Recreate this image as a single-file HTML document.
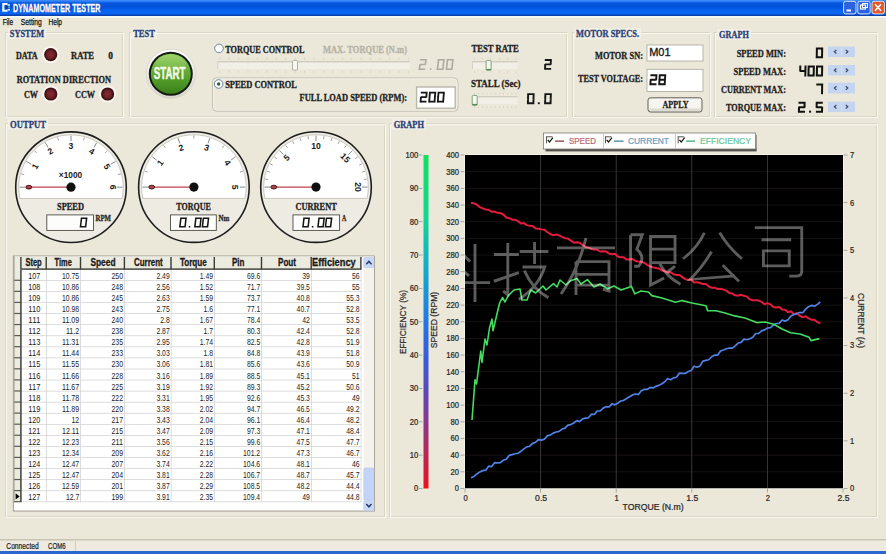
<!DOCTYPE html>
<html><head><meta charset="utf-8"><style>
html,body{margin:0;padding:0;background:#ebe8da;width:886px;height:554px;overflow:hidden}
svg{display:block}
</style></head><body>
<svg width="886" height="554" viewBox="0 0 886 554">
<rect x="0" y="0" width="886" height="554" fill="#ebe8da"/>
<defs>
<linearGradient id="tb" x1="0" y1="0" x2="0" y2="1">
 <stop offset="0" stop-color="#3f92fc"/><stop offset="0.1" stop-color="#2a78f0"/><stop offset="0.18" stop-color="#0658de"/><stop offset="0.45" stop-color="#0252dc"/><stop offset="0.7" stop-color="#0866f2"/><stop offset="0.86" stop-color="#0a64ee"/><stop offset="0.93" stop-color="#0a48c0"/><stop offset="1" stop-color="#0c3aa0"/>
</linearGradient>
<linearGradient id="tbh" x1="0" y1="0" x2="1" y2="0">
 <stop offset="0" stop-color="#0a50d0" stop-opacity="0.3"/><stop offset="1" stop-color="#3a8cff" stop-opacity="0"/>
</linearGradient>
</defs>
<rect x="0" y="0" width="886" height="16" fill="url(#tb)"/>
<rect x="0" y="16" width="886" height="1.8" fill="#f8faf4"/>
<path d="M2.2 3.0H7.6V5.0H4.4V9.8H7.6V11.8H2.2Z" fill="#eef4fa"/><path d="M5.6 5.6L9.8 7.4L5.6 9.2Z" fill="#103a90"/><rect x="7.6" y="4.2" width="2.4" height="1.6" fill="#c8f0e0"/><rect x="7.6" y="9.0" width="2.4" height="1.6" fill="#c8f0e0"/><rect x="8.0" y="6.6" width="2" height="1.6" fill="#50b0a0"/>
<text x="13.10" y="11.70" font-family='"Liberation Sans", sans-serif' font-weight="bold" font-size="10.47" fill="#0a2a7a" textLength="87.40" lengthAdjust="spacingAndGlyphs" transform="translate(0.8,0.8)" opacity="0.7">DYNAMOMETER TESTER</text>
<text x="13.10" y="11.70" font-family='"Liberation Sans", sans-serif' font-weight="bold" font-size="10.47" fill="#ffffff" textLength="87.40" lengthAdjust="spacingAndGlyphs" stroke="#ffffff" stroke-width="0.3">DYNAMOMETER TESTER</text>
<rect x="843.6" y="1.3" width="12.4" height="12.6" rx="2" fill="#2a62e0" stroke="#e8f0ff" stroke-width="0.9"/>
<rect x="857.8" y="1.3" width="12.4" height="12.6" rx="2" fill="#2a62e0" stroke="#e8f0ff" stroke-width="0.9"/>
<rect x="872.0" y="1.3" width="12.4" height="12.6" rx="2" fill="#e2582a" stroke="#e8f0ff" stroke-width="0.9"/>
<rect x="846.5" y="9.5" width="4.5" height="2" fill="#fff"/>
<rect x="860.5" y="5" width="5" height="4" fill="none" stroke="#fff" stroke-width="1.2"/><rect x="862.5" y="3.5" width="5" height="4" fill="none" stroke="#fff" stroke-width="1"/>
<path d="M875 4.2l6 6.6M881 4.2l-6 6.6" stroke="#fff" stroke-width="1.6"/>
<text x="2.70" y="24.60" font-family='"Liberation Sans", sans-serif' font-weight="normal" font-size="8.72" fill="#111" textLength="10.40" lengthAdjust="spacingAndGlyphs" stroke="#111" stroke-width="0.25">File</text>
<text x="20.80" y="24.60" font-family='"Liberation Sans", sans-serif' font-weight="normal" font-size="8.72" fill="#111" textLength="21.00" lengthAdjust="spacingAndGlyphs" stroke="#111" stroke-width="0.25">Setting</text>
<text x="48.50" y="24.60" font-family='"Liberation Sans", sans-serif' font-weight="normal" font-size="8.72" fill="#111" textLength="13.50" lengthAdjust="spacingAndGlyphs" stroke="#111" stroke-width="0.25">Help</text>
<rect x="5.5" y="32.5" width="117.0" height="84.0" fill="none" stroke="#d9d5c3" stroke-width="1"/>
<rect x="6.5" y="33.5" width="117.0" height="84.0" fill="none" stroke="#faf9f2" stroke-width="1"/>
<rect x="129.5" y="32.5" width="437.0" height="84.0" fill="none" stroke="#d9d5c3" stroke-width="1"/>
<rect x="130.5" y="33.5" width="437.0" height="84.0" fill="none" stroke="#faf9f2" stroke-width="1"/>
<rect x="572.5" y="32.5" width="137.0" height="84.0" fill="none" stroke="#d9d5c3" stroke-width="1"/>
<rect x="573.5" y="33.5" width="137.0" height="84.0" fill="none" stroke="#faf9f2" stroke-width="1"/>
<rect x="714.5" y="32.5" width="162.0" height="84.0" fill="none" stroke="#d9d5c3" stroke-width="1"/>
<rect x="715.5" y="33.5" width="162.0" height="84.0" fill="none" stroke="#faf9f2" stroke-width="1"/>
<rect x="5.5" y="123.8" width="379.0" height="392.7" fill="none" stroke="#d9d5c3" stroke-width="1"/>
<rect x="6.5" y="124.8" width="379.0" height="392.7" fill="none" stroke="#faf9f2" stroke-width="1"/>
<rect x="389.5" y="123.8" width="487.0" height="392.7" fill="none" stroke="#d9d5c3" stroke-width="1"/>
<rect x="390.5" y="124.8" width="487.0" height="392.7" fill="none" stroke="#faf9f2" stroke-width="1"/>
<rect x="7.8" y="28.5" width="38.5" height="10.4" fill="#f1efe6"/>
<text x="9.75" y="36.90" font-family='"Liberation Serif", serif' font-weight="bold" font-size="9.77" fill="#2a3e76" textLength="34.45" lengthAdjust="spacingAndGlyphs" stroke="#2a3e76" stroke-width="0.3">SYSTEM</text>
<rect x="131.2" y="28.5" width="25.8" height="10.5" fill="#f1efe6"/>
<text x="133.20" y="37.00" font-family='"Liberation Serif", serif' font-weight="bold" font-size="9.92" fill="#2a3e76" textLength="21.80" lengthAdjust="spacingAndGlyphs" stroke="#2a3e76" stroke-width="0.3">TEST</text>
<rect x="574.0" y="28.3" width="67.0" height="10.8" fill="#f1efe6"/>
<text x="576.00" y="37.10" font-family='"Liberation Serif", serif' font-weight="bold" font-size="10.38" fill="#2a3e76" textLength="63.00" lengthAdjust="spacingAndGlyphs" stroke="#2a3e76" stroke-width="0.3">MOTOR SPECS.</text>
<rect x="717.0" y="29.0" width="34.0" height="10.9" fill="#f1efe6"/>
<text x="719.00" y="37.90" font-family='"Liberation Serif", serif' font-weight="bold" font-size="10.53" fill="#2a3e76" textLength="30.00" lengthAdjust="spacingAndGlyphs" stroke="#2a3e76" stroke-width="0.3">GRAPH</text>
<rect x="8.0" y="118.8" width="40.0" height="10.8" fill="#f1efe6"/>
<text x="10.00" y="127.60" font-family='"Liberation Serif", serif' font-weight="bold" font-size="10.38" fill="#2a3e76" textLength="36.00" lengthAdjust="spacingAndGlyphs" stroke="#2a3e76" stroke-width="0.3">OUTPUT</text>
<rect x="391.7" y="118.9" width="34.3" height="10.8" fill="#f1efe6"/>
<text x="393.70" y="127.70" font-family='"Liberation Serif", serif' font-weight="bold" font-size="10.38" fill="#2a3e76" textLength="30.30" lengthAdjust="spacingAndGlyphs" stroke="#2a3e76" stroke-width="0.3">GRAPH</text>
<defs><radialGradient id="ledg" cx="0.5" cy="0.5" r="0.55"><stop offset="0" stop-color="#8a2a34"/><stop offset="0.65" stop-color="#6c2028"/><stop offset="1" stop-color="#421216"/></radialGradient></defs>
<text x="15.90" y="58.50" font-family='"Liberation Serif", serif' font-weight="bold" font-size="9.47" fill="#1c1c1c" textLength="21.80" lengthAdjust="spacingAndGlyphs" stroke="#1c1c1c" stroke-width="0.3">DATA</text>
<circle cx="50.7" cy="54.6" r="8.6" fill="#f8f6ee"/>
<circle cx="50.7" cy="54.6" r="6.6" fill="#3e1212"/>
<circle cx="50.7" cy="54.6" r="5.3" fill="url(#ledg)"/>
<text x="71.00" y="58.50" font-family='"Liberation Serif", serif' font-weight="bold" font-size="9.47" fill="#1c1c1c" textLength="23.00" lengthAdjust="spacingAndGlyphs" stroke="#1c1c1c" stroke-width="0.3">RATE</text>
<text x="108.30" y="58.50" font-family='"Liberation Serif", serif' font-weight="bold" font-size="9.47" fill="#1c1c1c" textLength="4.70" lengthAdjust="spacingAndGlyphs" stroke="#1c1c1c" stroke-width="0.3">0</text>
<text x="16.70" y="83.20" font-family='"Liberation Serif", serif' font-weight="bold" font-size="9.77" fill="#1c1c1c" textLength="94.30" lengthAdjust="spacingAndGlyphs" stroke="#1c1c1c" stroke-width="0.3">ROTATION DIRECTION</text>
<text x="24.00" y="98.00" font-family='"Liberation Serif", serif' font-weight="bold" font-size="9.77" fill="#1c1c1c" textLength="14.00" lengthAdjust="spacingAndGlyphs" stroke="#1c1c1c" stroke-width="0.3">CW</text>
<circle cx="50.8" cy="94.0" r="8.6" fill="#f8f6ee"/>
<circle cx="50.8" cy="94.0" r="6.6" fill="#3e1212"/>
<circle cx="50.8" cy="94.0" r="5.3" fill="url(#ledg)"/>
<text x="75.00" y="98.00" font-family='"Liberation Serif", serif' font-weight="bold" font-size="9.77" fill="#1c1c1c" textLength="20.00" lengthAdjust="spacingAndGlyphs" stroke="#1c1c1c" stroke-width="0.3">CCW</text>
<circle cx="107.6" cy="94.0" r="8.6" fill="#f8f6ee"/>
<circle cx="107.6" cy="94.0" r="6.6" fill="#3e1212"/>
<circle cx="107.6" cy="94.0" r="5.3" fill="url(#ledg)"/>
<defs>
<linearGradient id="startg" x1="0" y1="0" x2="0" y2="1"><stop offset="0" stop-color="#94cf5c"/><stop offset="0.35" stop-color="#6cb238"/><stop offset="0.6" stop-color="#56a02a"/><stop offset="1" stop-color="#3a7f1c"/></linearGradient>
<linearGradient id="startw" x1="0" y1="0" x2="0" y2="1"><stop offset="0" stop-color="#ffffff"/><stop offset="1" stop-color="#d8d6cc"/></linearGradient>
</defs>
<circle cx="170.8" cy="73.8" r="24.6" fill="url(#startw)" stroke="#cfccc0" stroke-width="0.6"/>
<circle cx="170.8" cy="73.8" r="22.0" fill="#141a10"/>
<circle cx="170.8" cy="73.8" r="20.0" fill="url(#startg)"/>
<ellipse cx="170.8" cy="63" rx="15" ry="8" fill="#ffffff" opacity="0.10"/>
<text x="153.80" y="79.40" font-family='"Liberation Sans", sans-serif' font-weight="bold" font-size="16.72" fill="#f2f8e6" textLength="31.70" lengthAdjust="spacingAndGlyphs" stroke="#f2f8e6" stroke-width="0.6">START</text>
<circle cx="219.0" cy="48.4" r="4.3" fill="#fbfbf8" stroke="#5a7aa0" stroke-width="0.9"/>
<text x="225.20" y="53.20" font-family='"Liberation Serif", serif' font-weight="bold" font-size="10.69" fill="#1c1c1c" textLength="79.20" lengthAdjust="spacingAndGlyphs" stroke="#1c1c1c" stroke-width="0.3">TORQUE CONTROL</text>
<text x="323.00" y="52.80" font-family='"Liberation Serif", serif' font-weight="bold" font-size="10.69" fill="#b6b2a4" textLength="84.00" lengthAdjust="spacingAndGlyphs" stroke="#b6b2a4" stroke-width="0.3">MAX. TORQUE (N.m)</text>
<rect x="219.3" y="57.8" width="0.8" height="1.6" fill="#cfcbbd"/>
<rect x="219.3" y="71.1" width="0.8" height="1.6" fill="#cfcbbd"/>
<rect x="228.7" y="57.8" width="0.8" height="1.6" fill="#cfcbbd"/>
<rect x="228.7" y="71.1" width="0.8" height="1.6" fill="#cfcbbd"/>
<rect x="238.2" y="57.8" width="0.8" height="1.6" fill="#cfcbbd"/>
<rect x="238.2" y="71.1" width="0.8" height="1.6" fill="#cfcbbd"/>
<rect x="247.6" y="57.8" width="0.8" height="1.6" fill="#cfcbbd"/>
<rect x="247.6" y="71.1" width="0.8" height="1.6" fill="#cfcbbd"/>
<rect x="257.0" y="57.8" width="0.8" height="1.6" fill="#cfcbbd"/>
<rect x="257.0" y="71.1" width="0.8" height="1.6" fill="#cfcbbd"/>
<rect x="266.5" y="57.8" width="0.8" height="1.6" fill="#cfcbbd"/>
<rect x="266.5" y="71.1" width="0.8" height="1.6" fill="#cfcbbd"/>
<rect x="275.9" y="57.8" width="0.8" height="1.6" fill="#cfcbbd"/>
<rect x="275.9" y="71.1" width="0.8" height="1.6" fill="#cfcbbd"/>
<rect x="285.3" y="57.8" width="0.8" height="1.6" fill="#cfcbbd"/>
<rect x="285.3" y="71.1" width="0.8" height="1.6" fill="#cfcbbd"/>
<rect x="294.8" y="57.8" width="0.8" height="1.6" fill="#cfcbbd"/>
<rect x="294.8" y="71.1" width="0.8" height="1.6" fill="#cfcbbd"/>
<rect x="304.2" y="57.8" width="0.8" height="1.6" fill="#cfcbbd"/>
<rect x="304.2" y="71.1" width="0.8" height="1.6" fill="#cfcbbd"/>
<rect x="313.6" y="57.8" width="0.8" height="1.6" fill="#cfcbbd"/>
<rect x="313.6" y="71.1" width="0.8" height="1.6" fill="#cfcbbd"/>
<rect x="323.1" y="57.8" width="0.8" height="1.6" fill="#cfcbbd"/>
<rect x="323.1" y="71.1" width="0.8" height="1.6" fill="#cfcbbd"/>
<rect x="332.5" y="57.8" width="0.8" height="1.6" fill="#cfcbbd"/>
<rect x="332.5" y="71.1" width="0.8" height="1.6" fill="#cfcbbd"/>
<rect x="342.0" y="57.8" width="0.8" height="1.6" fill="#cfcbbd"/>
<rect x="342.0" y="71.1" width="0.8" height="1.6" fill="#cfcbbd"/>
<rect x="351.4" y="57.8" width="0.8" height="1.6" fill="#cfcbbd"/>
<rect x="351.4" y="71.1" width="0.8" height="1.6" fill="#cfcbbd"/>
<rect x="360.8" y="57.8" width="0.8" height="1.6" fill="#cfcbbd"/>
<rect x="360.8" y="71.1" width="0.8" height="1.6" fill="#cfcbbd"/>
<rect x="370.3" y="57.8" width="0.8" height="1.6" fill="#cfcbbd"/>
<rect x="370.3" y="71.1" width="0.8" height="1.6" fill="#cfcbbd"/>
<rect x="379.7" y="57.8" width="0.8" height="1.6" fill="#cfcbbd"/>
<rect x="379.7" y="71.1" width="0.8" height="1.6" fill="#cfcbbd"/>
<rect x="389.1" y="57.8" width="0.8" height="1.6" fill="#cfcbbd"/>
<rect x="389.1" y="71.1" width="0.8" height="1.6" fill="#cfcbbd"/>
<rect x="398.6" y="57.8" width="0.8" height="1.6" fill="#cfcbbd"/>
<rect x="398.6" y="71.1" width="0.8" height="1.6" fill="#cfcbbd"/>
<rect x="408.0" y="57.8" width="0.8" height="1.6" fill="#cfcbbd"/>
<rect x="408.0" y="71.1" width="0.8" height="1.6" fill="#cfcbbd"/>
<rect x="217.3" y="61.5" width="192.7" height="7.5" fill="#f2f0e6"/>
<rect x="217.3" y="61.3" width="192.7" height="1" fill="#c4c0b2"/>
<rect x="217.3" y="61.3" width="1" height="7.7" fill="#d6d2c4"/>
<rect x="292.5" y="60.4" width="5" height="9.8" rx="1.2" fill="#f8f7f2" stroke="#a9a597" stroke-width="0.9"/>
<rect x="429.85" y="68.40" width="1.60" height="1.60" fill="#aeaa9e"/>
<path d="M420.92 59.80L425.92 59.80M420.71 64.50L424.61 64.50M419.40 69.20L424.40 69.20M419.89 65.05L419.40 69.20M425.92 59.80L425.43 63.95M438.52 59.80L443.92 59.80M437.40 69.20L442.80 69.20M438.52 59.80L438.03 63.95M437.89 65.05L437.40 69.20M443.92 59.80L443.43 63.95M443.29 65.05L442.80 69.20M447.52 59.80L452.92 59.80M446.40 69.20L451.80 69.20M447.52 59.80L447.03 63.95M446.89 65.05L446.40 69.20M452.92 59.80L452.43 63.95M452.29 65.05L451.80 69.20" stroke="#aeaa9e" stroke-width="1.60" fill="none" stroke-linecap="square" stroke-linejoin="round"/>
<rect x="212.5" y="77.9" width="245.5" height="33.3" rx="4" fill="none" stroke="#c0bcad" stroke-width="0.9"/>
<rect x="213.5" y="78.9" width="243.5" height="31.3" rx="3.5" fill="none" stroke="#f8f7f0" stroke-width="0.6"/>
<circle cx="218.6" cy="84.0" r="4.3" fill="#fbfbf8" stroke="#5a7aa0" stroke-width="0.9"/>
<circle cx="218.6" cy="84.0" r="1.7" fill="#3a5a3a"/>
<text x="225.20" y="88.40" font-family='"Liberation Serif", serif' font-weight="bold" font-size="10.38" fill="#1c1c1c" textLength="71.70" lengthAdjust="spacingAndGlyphs" stroke="#1c1c1c" stroke-width="0.3">SPEED CONTROL</text>
<text x="299.60" y="101.40" font-family='"Liberation Serif", serif' font-weight="bold" font-size="10.38" fill="#1c1c1c" textLength="107.40" lengthAdjust="spacingAndGlyphs" stroke="#1c1c1c" stroke-width="0.3">FULL LOAD SPEED (RPM):</text>
<rect x="416.6" y="87.0" width="38.6" height="21.2" fill="#ffffff" stroke="#bab7ab" stroke-width="1.4"/>
<path d="M421.69 92.70L426.69 92.70M421.68 97.20L425.58 97.20M420.57 101.70L425.57 101.70M420.89 97.75L420.57 101.70M426.69 92.70L426.38 96.65M429.89 92.70L435.29 92.70M429.17 101.70L434.57 101.70M429.89 92.70L429.58 96.65M429.49 97.75L429.17 101.70M435.29 92.70L434.98 96.65M434.89 97.75L434.57 101.70M438.49 92.70L443.89 92.70M437.77 101.70L443.17 101.70M438.49 92.70L438.18 96.65M438.09 97.75L437.77 101.70M443.89 92.70L443.58 96.65M443.49 97.75L443.17 101.70" stroke="#151515" stroke-width="1.80" fill="none" stroke-linecap="square" stroke-linejoin="round"/>
<text x="471.60" y="52.20" font-family='"Liberation Serif", serif' font-weight="bold" font-size="9.77" fill="#1c1c1c" textLength="47.20" lengthAdjust="spacingAndGlyphs" stroke="#1c1c1c" stroke-width="0.3">TEST RATE</text>
<rect x="474.0" y="57.8" width="0.8" height="1.6" fill="#cfcbbd"/>
<rect x="474.0" y="71.2" width="0.8" height="1.6" fill="#cfcbbd"/>
<rect x="482.3" y="57.8" width="0.8" height="1.6" fill="#cfcbbd"/>
<rect x="482.3" y="71.2" width="0.8" height="1.6" fill="#cfcbbd"/>
<rect x="490.6" y="57.8" width="0.8" height="1.6" fill="#cfcbbd"/>
<rect x="490.6" y="71.2" width="0.8" height="1.6" fill="#cfcbbd"/>
<rect x="499.0" y="57.8" width="0.8" height="1.6" fill="#cfcbbd"/>
<rect x="499.0" y="71.2" width="0.8" height="1.6" fill="#cfcbbd"/>
<rect x="507.3" y="57.8" width="0.8" height="1.6" fill="#cfcbbd"/>
<rect x="507.3" y="71.2" width="0.8" height="1.6" fill="#cfcbbd"/>
<rect x="515.6" y="57.8" width="0.8" height="1.6" fill="#cfcbbd"/>
<rect x="515.6" y="71.2" width="0.8" height="1.6" fill="#cfcbbd"/>
<rect x="472.0" y="61.5" width="45.6" height="7.6" fill="#f2f0e6"/>
<rect x="472.0" y="61.3" width="45.6" height="1" fill="#c4c0b2"/>
<rect x="472.0" y="61.3" width="1" height="7.8" fill="#d6d2c4"/>
<rect x="486.1" y="60.4" width="5" height="9.8" rx="1.2" fill="#f8f7f2" stroke="#6a9a6a" stroke-width="0.9"/>
<rect x="486.1" y="68.9" width="5" height="1.4" fill="#5a8a5a"/>
<path d="M545.75 59.95L550.85 59.95M545.96 64.40L549.96 64.40M545.08 68.85L550.18 68.85M545.20 64.95L545.08 68.85M550.85 59.95L550.73 63.85" stroke="#151515" stroke-width="1.90" fill="none" stroke-linecap="square" stroke-linejoin="round"/>
<text x="471.00" y="86.80" font-family='"Liberation Serif", serif' font-weight="bold" font-size="10.08" fill="#1c1c1c" textLength="49.50" lengthAdjust="spacingAndGlyphs" stroke="#1c1c1c" stroke-width="0.3">STALL (Sec)</text>
<rect x="474.0" y="92.8" width="0.8" height="1.6" fill="#cfcbbd"/>
<rect x="474.0" y="106.3" width="0.8" height="1.6" fill="#cfcbbd"/>
<rect x="478.2" y="92.8" width="0.8" height="1.6" fill="#cfcbbd"/>
<rect x="478.2" y="106.3" width="0.8" height="1.6" fill="#cfcbbd"/>
<rect x="482.3" y="92.8" width="0.8" height="1.6" fill="#cfcbbd"/>
<rect x="482.3" y="106.3" width="0.8" height="1.6" fill="#cfcbbd"/>
<rect x="486.5" y="92.8" width="0.8" height="1.6" fill="#cfcbbd"/>
<rect x="486.5" y="106.3" width="0.8" height="1.6" fill="#cfcbbd"/>
<rect x="490.6" y="92.8" width="0.8" height="1.6" fill="#cfcbbd"/>
<rect x="490.6" y="106.3" width="0.8" height="1.6" fill="#cfcbbd"/>
<rect x="494.8" y="92.8" width="0.8" height="1.6" fill="#cfcbbd"/>
<rect x="494.8" y="106.3" width="0.8" height="1.6" fill="#cfcbbd"/>
<rect x="499.0" y="92.8" width="0.8" height="1.6" fill="#cfcbbd"/>
<rect x="499.0" y="106.3" width="0.8" height="1.6" fill="#cfcbbd"/>
<rect x="503.1" y="92.8" width="0.8" height="1.6" fill="#cfcbbd"/>
<rect x="503.1" y="106.3" width="0.8" height="1.6" fill="#cfcbbd"/>
<rect x="507.3" y="92.8" width="0.8" height="1.6" fill="#cfcbbd"/>
<rect x="507.3" y="106.3" width="0.8" height="1.6" fill="#cfcbbd"/>
<rect x="511.4" y="92.8" width="0.8" height="1.6" fill="#cfcbbd"/>
<rect x="511.4" y="106.3" width="0.8" height="1.6" fill="#cfcbbd"/>
<rect x="515.6" y="92.8" width="0.8" height="1.6" fill="#cfcbbd"/>
<rect x="515.6" y="106.3" width="0.8" height="1.6" fill="#cfcbbd"/>
<rect x="472.0" y="96.5" width="45.6" height="7.7" fill="#f2f0e6"/>
<rect x="472.0" y="96.3" width="45.6" height="1" fill="#c4c0b2"/>
<rect x="472.0" y="96.3" width="1" height="7.9" fill="#d6d2c4"/>
<rect x="472.2" y="95.4" width="5" height="9.8" rx="1.2" fill="#f8f7f2" stroke="#6a9a6a" stroke-width="0.9"/>
<rect x="472.2" y="103.9" width="5" height="1.4" fill="#5a8a5a"/>
<rect x="537.88" y="102.30" width="1.90" height="1.90" fill="#151515"/>
<path d="M528.15 94.15L533.65 94.15M527.88 103.25L533.38 103.25M528.15 94.15L528.03 98.15M528.00 99.25L527.88 103.25M533.65 94.15L533.53 98.15M533.50 99.25L533.38 103.25M545.35 94.15L550.85 94.15M545.08 103.25L550.58 103.25M545.35 94.15L545.23 98.15M545.20 99.25L545.08 103.25M550.85 94.15L550.73 98.15M550.70 99.25L550.58 103.25" stroke="#151515" stroke-width="1.90" fill="none" stroke-linecap="square" stroke-linejoin="round"/>
<text x="595.00" y="59.30" font-family='"Liberation Serif", serif' font-weight="bold" font-size="9.92" fill="#1c1c1c" textLength="48.00" lengthAdjust="spacingAndGlyphs" stroke="#1c1c1c" stroke-width="0.3">MOTOR SN:</text>
<rect x="647" y="45" width="56" height="16" fill="#ffffff" stroke="#a9a699" stroke-width="0.8"/>
<text x="649.20" y="56.20" font-family='"Liberation Sans", sans-serif' font-weight="normal" font-size="11.48" fill="#1a1a1a" textLength="21.40" lengthAdjust="spacingAndGlyphs" stroke="#1a1a1a" stroke-width="0.35">M01</text>
<text x="578.00" y="82.30" font-family='"Liberation Serif", serif' font-weight="bold" font-size="10.84" fill="#1c1c1c" textLength="65.00" lengthAdjust="spacingAndGlyphs" stroke="#1c1c1c" stroke-width="0.3">TEST VOLTAGE:</text>
<rect x="647" y="69.3" width="56" height="22.2" fill="#ffffff" stroke="#a9a699" stroke-width="0.8"/>
<path d="M651.35 75.25L656.45 75.25M651.43 79.75L655.43 79.75M650.41 84.25L655.51 84.25M650.64 80.30L650.41 84.25M656.45 75.25L656.21 79.20M659.75 75.25L665.25 75.25M660.23 79.75L664.23 79.75M659.21 84.25L664.71 84.25M659.75 75.25L659.51 79.20M659.44 80.30L659.21 84.25M665.25 75.25L665.01 79.20M664.94 80.30L664.71 84.25" stroke="#151515" stroke-width="1.90" fill="none" stroke-linecap="square" stroke-linejoin="round"/>
<rect x="648" y="97.8" width="54" height="14.2" rx="2.5" fill="#f6f5ef" stroke="#4f4d48" stroke-width="0.9"/>
<rect x="649" y="108.5" width="52" height="2.5" fill="#dedbd0"/>
<text x="662.50" y="108.40" font-family='"Liberation Serif", serif' font-weight="bold" font-size="10.38" fill="#1c1c1c" textLength="26.10" lengthAdjust="spacingAndGlyphs" stroke="#1c1c1c" stroke-width="0.3">APPLY</text>
<text x="736.70" y="57.20" font-family='"Liberation Serif", serif' font-weight="bold" font-size="10.69" fill="#1c1c1c" textLength="49.30" lengthAdjust="spacingAndGlyphs" stroke="#1c1c1c" stroke-width="0.3">SPEED MIN:</text>
<text x="733.60" y="75.20" font-family='"Liberation Serif", serif' font-weight="bold" font-size="10.69" fill="#1c1c1c" textLength="52.40" lengthAdjust="spacingAndGlyphs" stroke="#1c1c1c" stroke-width="0.3">SPEED MAX:</text>
<text x="721.00" y="93.00" font-family='"Liberation Serif", serif' font-weight="bold" font-size="10.69" fill="#1c1c1c" textLength="65.00" lengthAdjust="spacingAndGlyphs" stroke="#1c1c1c" stroke-width="0.3">CURRENT MAX:</text>
<text x="726.00" y="111.00" font-family='"Liberation Serif", serif' font-weight="bold" font-size="10.69" fill="#1c1c1c" textLength="60.00" lengthAdjust="spacingAndGlyphs" stroke="#1c1c1c" stroke-width="0.3">TORQUE MAX:</text>
<path d="M816.89 48.60L822.19 48.60M816.72 57.30L822.02 57.30M816.89 48.60L816.82 52.40M816.80 53.50L816.72 57.30M822.19 48.60L822.12 52.40M822.10 53.50L822.02 57.30" stroke="#111" stroke-width="2.00" fill="none" stroke-linecap="square" stroke-linejoin="round"/>
<path d="M800.96 71.10L804.66 71.10M800.30 66.60L800.22 70.55M805.50 66.60L805.42 70.55M805.40 71.65L805.32 75.60M808.65 66.60L813.85 66.60M808.47 75.60L813.67 75.60M808.65 66.60L808.57 70.55M808.55 71.65L808.47 75.60M813.85 66.60L813.77 70.55M813.75 71.65L813.67 75.60M817.00 66.60L822.20 66.60M816.82 75.60L822.02 75.60M817.00 66.60L816.92 70.55M816.90 71.65L816.82 75.60M822.20 66.60L822.12 70.55M822.10 71.65L822.02 75.60" stroke="#111" stroke-width="2.00" fill="none" stroke-linecap="square" stroke-linejoin="round"/>
<path d="M817.29 84.50L822.19 84.50M822.19 84.50L822.12 88.30M822.10 89.40L822.02 93.20" stroke="#111" stroke-width="2.00" fill="none" stroke-linecap="square" stroke-linejoin="round"/>
<rect x="809.07" y="110.70" width="2.00" height="2.00" fill="#111"/>
<path d="M799.50 102.70L804.60 102.70M799.76 107.20L803.76 107.20M798.92 111.70L804.02 111.70M799.00 107.75L798.92 111.70M804.60 102.70L804.52 106.65M816.70 102.70L821.80 102.70M817.36 107.20L821.36 107.20M816.92 111.70L822.02 111.70M816.70 102.70L816.62 106.65M822.10 107.75L822.02 111.70" stroke="#111" stroke-width="2.00" fill="none" stroke-linecap="square" stroke-linejoin="round"/>
<rect x="828" y="46.5" width="27" height="10.5" fill="#c5d5f0"/>
<rect x="841.3" y="47.5" width="0.6" height="8.5" fill="#dfe8f6"/>
<path d="M836.4 50.0l-2 1.8l2 1.8M845.8 50.0l2 1.8l-2 1.8" fill="none" stroke="#34466e" stroke-width="1.2"/>
<rect x="828" y="65.0" width="27" height="10.5" fill="#c5d5f0"/>
<rect x="841.3" y="66.0" width="0.6" height="8.5" fill="#dfe8f6"/>
<path d="M836.4 68.5l-2 1.8l2 1.8M845.8 68.5l2 1.8l-2 1.8" fill="none" stroke="#34466e" stroke-width="1.2"/>
<rect x="828" y="82.7" width="27" height="10.8" fill="#c5d5f0"/>
<rect x="841.3" y="83.7" width="0.6" height="8.8" fill="#dfe8f6"/>
<path d="M836.4 86.3l-2 1.8l2 1.8M845.8 86.3l2 1.8l-2 1.8" fill="none" stroke="#34466e" stroke-width="1.2"/>
<rect x="828" y="101.7" width="27" height="10.3" fill="#c5d5f0"/>
<rect x="841.3" y="102.7" width="0.6" height="8.3" fill="#dfe8f6"/>
<path d="M836.4 105.0l-2 1.8l2 1.8M845.8 105.0l2 1.8l-2 1.8" fill="none" stroke="#34466e" stroke-width="1.2"/>
<rect x="0" y="539.5" width="886" height="1" fill="#a3a08f"/>
<rect x="0" y="540.5" width="886" height="10.5" fill="#efeae0"/>
<rect x="75" y="541" width="0.8" height="10" fill="#c9c5b6"/>
<text x="6.30" y="549.40" font-family='"Liberation Sans", sans-serif' font-weight="normal" font-size="8.43" fill="#222" textLength="32.40" lengthAdjust="spacingAndGlyphs" stroke="#222" stroke-width="0.2">Connected</text>
<text x="48.00" y="549.40" font-family='"Liberation Sans", sans-serif' font-weight="normal" font-size="8.43" fill="#222" textLength="17.60" lengthAdjust="spacingAndGlyphs" stroke="#222" stroke-width="0.2">COM6</text>
<rect x="0" y="551" width="886" height="3" fill="#2a66d0"/>
<circle cx="71.00" cy="187.20" r="55.30" fill="#eeebe3" stroke="#1e1e1e" stroke-width="1.6"/>
<path d="M19.94 198.50A52.30 52.30 0 1 1 122.06 198.50Z" fill="#ffffff" stroke="#b9b6ac" stroke-width="0.7"/>
<line x1="25.00" y1="187.20" x2="19.50" y2="187.20" stroke="#7a7a7a" stroke-width="0.90"/>
<line x1="24.15" y1="174.65" x2="21.25" y2="173.87" stroke="#7a7a7a" stroke-width="0.70"/>
<line x1="31.16" y1="164.20" x2="26.40" y2="161.45" stroke="#7a7a7a" stroke-width="0.90"/>
<line x1="36.71" y1="152.91" x2="34.58" y2="150.78" stroke="#7a7a7a" stroke-width="0.70"/>
<line x1="48.00" y1="147.36" x2="45.25" y2="142.60" stroke="#7a7a7a" stroke-width="0.90"/>
<line x1="58.45" y1="140.35" x2="57.67" y2="137.45" stroke="#7a7a7a" stroke-width="0.70"/>
<line x1="71.00" y1="141.20" x2="71.00" y2="135.70" stroke="#7a7a7a" stroke-width="0.90"/>
<line x1="83.55" y1="140.35" x2="84.33" y2="137.45" stroke="#7a7a7a" stroke-width="0.70"/>
<line x1="94.00" y1="147.36" x2="96.75" y2="142.60" stroke="#7a7a7a" stroke-width="0.90"/>
<line x1="105.29" y1="152.91" x2="107.42" y2="150.78" stroke="#7a7a7a" stroke-width="0.70"/>
<line x1="110.84" y1="164.20" x2="115.60" y2="161.45" stroke="#7a7a7a" stroke-width="0.90"/>
<line x1="117.85" y1="174.65" x2="120.75" y2="173.87" stroke="#7a7a7a" stroke-width="0.70"/>
<line x1="117.00" y1="187.20" x2="122.50" y2="187.20" stroke="#7a7a7a" stroke-width="0.90"/>
<text x="0" y="0" transform="translate(35.06,166.45) rotate(-60.0)" font-family='"Liberation Sans", sans-serif' font-weight="bold" font-size="8.6" fill="#1a1a1a" text-anchor="middle" dominant-baseline="central">1</text>
<text x="0" y="0" transform="translate(50.25,151.26) rotate(-30.0)" font-family='"Liberation Sans", sans-serif' font-weight="bold" font-size="8.6" fill="#1a1a1a" text-anchor="middle" dominant-baseline="central">2</text>
<text x="0" y="0" transform="translate(71.00,145.70) rotate(0.0)" font-family='"Liberation Sans", sans-serif' font-weight="bold" font-size="8.6" fill="#1a1a1a" text-anchor="middle" dominant-baseline="central">3</text>
<text x="0" y="0" transform="translate(91.75,151.26) rotate(30.0)" font-family='"Liberation Sans", sans-serif' font-weight="bold" font-size="8.6" fill="#1a1a1a" text-anchor="middle" dominant-baseline="central">4</text>
<text x="0" y="0" transform="translate(106.94,166.45) rotate(60.0)" font-family='"Liberation Sans", sans-serif' font-weight="bold" font-size="8.6" fill="#1a1a1a" text-anchor="middle" dominant-baseline="central">5</text>
<text x="0" y="0" transform="translate(112.50,187.20) rotate(90.0)" font-family='"Liberation Sans", sans-serif' font-weight="bold" font-size="8.6" fill="#1a1a1a" text-anchor="middle" dominant-baseline="central">6</text>
<line x1="26.50" y1="187.20" x2="71.00" y2="187.20" stroke="#c0404c" stroke-width="1.3"/>
<ellipse cx="28.80" cy="187.20" rx="3.0" ry="1.9" fill="#b04048" stroke="#3a1010" stroke-width="0.9"/>
<circle cx="71.00" cy="187.20" r="4.6" fill="#101010"/>
<text x="57.00" y="210.30" font-family='"Liberation Serif", serif' font-weight="bold" font-size="9.92" fill="#1c1c1c" textLength="27.00" lengthAdjust="spacingAndGlyphs" stroke="#1c1c1c" stroke-width="0.3">SPEED</text>
<rect x="46.80" y="214.9" width="46.70" height="15.5" fill="#fdfdfb" stroke="#4a4a46" stroke-width="0.9"/>
<path d="M81.48 218.28L86.63 218.28M80.47 226.72L85.62 226.72M81.48 218.28L81.04 221.95M80.91 223.05L80.47 226.72M86.63 218.28L86.19 221.95M86.06 223.05L85.62 226.72" stroke="#151515" stroke-width="1.55" fill="none" stroke-linecap="square" stroke-linejoin="round"/>
<text x="95.50" y="220.80" font-family='"Liberation Serif", serif' font-weight="bold" font-size="7.94" fill="#2a2a2a" textLength="15.50" lengthAdjust="spacingAndGlyphs" stroke="#2a2a2a" stroke-width="0.3">RPM</text>
<text x="70.5" y="178.4" font-family='"Liberation Sans", sans-serif' font-weight="bold" font-size="9.6" fill="#1a1a1a" text-anchor="middle" textLength="23.4" lengthAdjust="spacingAndGlyphs">×1000</text>
<circle cx="193.90" cy="187.10" r="55.30" fill="#eeebe3" stroke="#1e1e1e" stroke-width="1.6"/>
<path d="M142.84 198.40A52.30 52.30 0 1 1 244.96 198.40Z" fill="#ffffff" stroke="#b9b6ac" stroke-width="0.7"/>
<line x1="147.90" y1="187.10" x2="142.40" y2="187.10" stroke="#7a7a7a" stroke-width="0.90"/>
<line x1="147.77" y1="172.11" x2="144.92" y2="171.19" stroke="#7a7a7a" stroke-width="0.70"/>
<line x1="156.69" y1="160.06" x2="152.24" y2="156.83" stroke="#7a7a7a" stroke-width="0.90"/>
<line x1="165.39" y1="147.86" x2="163.63" y2="145.44" stroke="#7a7a7a" stroke-width="0.70"/>
<line x1="179.69" y1="143.35" x2="177.99" y2="138.12" stroke="#7a7a7a" stroke-width="0.90"/>
<line x1="193.90" y1="138.60" x2="193.90" y2="135.60" stroke="#7a7a7a" stroke-width="0.70"/>
<line x1="208.11" y1="143.35" x2="209.81" y2="138.12" stroke="#7a7a7a" stroke-width="0.90"/>
<line x1="222.41" y1="147.86" x2="224.17" y2="145.44" stroke="#7a7a7a" stroke-width="0.70"/>
<line x1="231.11" y1="160.06" x2="235.56" y2="156.83" stroke="#7a7a7a" stroke-width="0.90"/>
<line x1="240.03" y1="172.11" x2="242.88" y2="171.19" stroke="#7a7a7a" stroke-width="0.70"/>
<line x1="239.90" y1="187.10" x2="245.40" y2="187.10" stroke="#7a7a7a" stroke-width="0.90"/>
<text x="0" y="0" transform="translate(160.33,162.71) rotate(-54.0)" font-family='"Liberation Sans", sans-serif' font-weight="bold" font-size="8.6" fill="#1a1a1a" text-anchor="middle" dominant-baseline="central">1</text>
<text x="0" y="0" transform="translate(181.08,147.63) rotate(-18.0)" font-family='"Liberation Sans", sans-serif' font-weight="bold" font-size="8.6" fill="#1a1a1a" text-anchor="middle" dominant-baseline="central">2</text>
<text x="0" y="0" transform="translate(206.72,147.63) rotate(18.0)" font-family='"Liberation Sans", sans-serif' font-weight="bold" font-size="8.6" fill="#1a1a1a" text-anchor="middle" dominant-baseline="central">3</text>
<text x="0" y="0" transform="translate(227.47,162.71) rotate(54.0)" font-family='"Liberation Sans", sans-serif' font-weight="bold" font-size="8.6" fill="#1a1a1a" text-anchor="middle" dominant-baseline="central">4</text>
<text x="0" y="0" transform="translate(235.40,187.10) rotate(90.0)" font-family='"Liberation Sans", sans-serif' font-weight="bold" font-size="8.6" fill="#1a1a1a" text-anchor="middle" dominant-baseline="central">5</text>
<line x1="149.40" y1="187.10" x2="193.90" y2="187.10" stroke="#c0404c" stroke-width="1.3"/>
<ellipse cx="151.70" cy="187.10" rx="3.0" ry="1.9" fill="#b04048" stroke="#3a1010" stroke-width="0.9"/>
<circle cx="193.90" cy="187.10" r="4.6" fill="#101010"/>
<text x="176.30" y="210.30" font-family='"Liberation Serif", serif' font-weight="bold" font-size="9.92" fill="#1c1c1c" textLength="34.50" lengthAdjust="spacingAndGlyphs" stroke="#1c1c1c" stroke-width="0.3">TORQUE</text>
<rect x="170.50" y="214.9" width="45.80" height="15.5" fill="#fdfdfb" stroke="#4a4a46" stroke-width="0.9"/>
<rect x="188.74" y="225.95" width="1.55" height="1.55" fill="#151515"/>
<path d="M180.88 218.28L186.03 218.28M179.87 226.72L185.02 226.72M180.88 218.28L180.44 221.95M180.31 223.05L179.87 226.72M186.03 218.28L185.59 221.95M185.46 223.05L185.02 226.72M195.88 218.28L201.03 218.28M194.87 226.72L200.02 226.72M195.88 218.28L195.44 221.95M195.31 223.05L194.87 226.72M201.03 218.28L200.59 221.95M200.46 223.05L200.02 226.72M203.38 218.28L208.53 218.28M202.37 226.72L207.52 226.72M203.38 218.28L202.94 221.95M202.81 223.05L202.37 226.72M208.53 218.28L208.09 221.95M207.96 223.05L207.52 226.72" stroke="#151515" stroke-width="1.55" fill="none" stroke-linecap="square" stroke-linejoin="round"/>
<text x="218.50" y="220.80" font-family='"Liberation Serif", serif' font-weight="bold" font-size="7.94" fill="#2a2a2a" textLength="10.80" lengthAdjust="spacingAndGlyphs" stroke="#2a2a2a" stroke-width="0.3">Nm</text>
<circle cx="316.00" cy="187.10" r="55.30" fill="#eeebe3" stroke="#1e1e1e" stroke-width="1.6"/>
<path d="M264.94 198.40A52.30 52.30 0 1 1 367.06 198.40Z" fill="#ffffff" stroke="#b9b6ac" stroke-width="0.7"/>
<line x1="270.00" y1="187.10" x2="264.50" y2="187.10" stroke="#7a7a7a" stroke-width="0.90"/>
<line x1="268.10" y1="179.51" x2="265.13" y2="179.04" stroke="#7a7a7a" stroke-width="0.70"/>
<line x1="269.87" y1="172.11" x2="267.02" y2="171.19" stroke="#7a7a7a" stroke-width="0.70"/>
<line x1="272.79" y1="165.08" x2="270.11" y2="163.72" stroke="#7a7a7a" stroke-width="0.70"/>
<line x1="276.76" y1="158.59" x2="274.34" y2="156.83" stroke="#7a7a7a" stroke-width="0.70"/>
<line x1="283.47" y1="154.57" x2="279.58" y2="150.68" stroke="#7a7a7a" stroke-width="0.90"/>
<line x1="287.49" y1="147.86" x2="285.73" y2="145.44" stroke="#7a7a7a" stroke-width="0.70"/>
<line x1="293.98" y1="143.89" x2="292.62" y2="141.21" stroke="#7a7a7a" stroke-width="0.70"/>
<line x1="301.01" y1="140.97" x2="300.09" y2="138.12" stroke="#7a7a7a" stroke-width="0.70"/>
<line x1="308.41" y1="139.20" x2="307.94" y2="136.23" stroke="#7a7a7a" stroke-width="0.70"/>
<line x1="316.00" y1="141.10" x2="316.00" y2="135.60" stroke="#7a7a7a" stroke-width="0.90"/>
<line x1="323.59" y1="139.20" x2="324.06" y2="136.23" stroke="#7a7a7a" stroke-width="0.70"/>
<line x1="330.99" y1="140.97" x2="331.91" y2="138.12" stroke="#7a7a7a" stroke-width="0.70"/>
<line x1="338.02" y1="143.89" x2="339.38" y2="141.21" stroke="#7a7a7a" stroke-width="0.70"/>
<line x1="344.51" y1="147.86" x2="346.27" y2="145.44" stroke="#7a7a7a" stroke-width="0.70"/>
<line x1="348.53" y1="154.57" x2="352.42" y2="150.68" stroke="#7a7a7a" stroke-width="0.90"/>
<line x1="355.24" y1="158.59" x2="357.66" y2="156.83" stroke="#7a7a7a" stroke-width="0.70"/>
<line x1="359.21" y1="165.08" x2="361.89" y2="163.72" stroke="#7a7a7a" stroke-width="0.70"/>
<line x1="362.13" y1="172.11" x2="364.98" y2="171.19" stroke="#7a7a7a" stroke-width="0.70"/>
<line x1="363.90" y1="179.51" x2="366.87" y2="179.04" stroke="#7a7a7a" stroke-width="0.70"/>
<line x1="362.00" y1="187.10" x2="367.50" y2="187.10" stroke="#7a7a7a" stroke-width="0.90"/>
<text x="0" y="0" transform="translate(286.66,157.76) rotate(-45.0)" font-family='"Liberation Sans", sans-serif' font-weight="bold" font-size="8.6" fill="#1a1a1a" text-anchor="middle" dominant-baseline="central">5</text>
<text x="0" y="0" transform="translate(316.00,145.60) rotate(0.0)" font-family='"Liberation Sans", sans-serif' font-weight="bold" font-size="8.6" fill="#1a1a1a" text-anchor="middle" dominant-baseline="central">10</text>
<text x="0" y="0" transform="translate(345.34,157.76) rotate(45.0)" font-family='"Liberation Sans", sans-serif' font-weight="bold" font-size="8.6" fill="#1a1a1a" text-anchor="middle" dominant-baseline="central">15</text>
<text x="0" y="0" transform="translate(357.50,187.10) rotate(90.0)" font-family='"Liberation Sans", sans-serif' font-weight="bold" font-size="8.6" fill="#1a1a1a" text-anchor="middle" dominant-baseline="central">20</text>
<line x1="271.50" y1="187.10" x2="316.00" y2="187.10" stroke="#c0404c" stroke-width="1.3"/>
<ellipse cx="273.80" cy="187.10" rx="3.0" ry="1.9" fill="#b04048" stroke="#3a1010" stroke-width="0.9"/>
<circle cx="316.00" cy="187.10" r="4.6" fill="#101010"/>
<text x="295.60" y="210.30" font-family='"Liberation Serif", serif' font-weight="bold" font-size="9.92" fill="#1c1c1c" textLength="41.10" lengthAdjust="spacingAndGlyphs" stroke="#1c1c1c" stroke-width="0.3">CURRENT</text>
<rect x="293.00" y="214.9" width="46.60" height="15.5" fill="#fdfdfb" stroke="#4a4a46" stroke-width="0.9"/>
<rect x="311.84" y="225.95" width="1.55" height="1.55" fill="#151515"/>
<path d="M303.98 218.28L309.13 218.28M302.97 226.72L308.12 226.72M303.98 218.28L303.54 221.95M303.41 223.05L302.97 226.72M309.13 218.28L308.69 221.95M308.56 223.05L308.12 226.72M318.98 218.28L324.13 218.28M317.97 226.72L323.12 226.72M318.98 218.28L318.54 221.95M318.41 223.05L317.97 226.72M324.13 218.28L323.69 221.95M323.56 223.05L323.12 226.72M326.48 218.28L331.63 218.28M325.47 226.72L330.62 226.72M326.48 218.28L326.04 221.95M325.91 223.05L325.47 226.72M331.63 218.28L331.19 221.95M331.06 223.05L330.62 226.72" stroke="#151515" stroke-width="1.55" fill="none" stroke-linecap="square" stroke-linejoin="round"/>
<text x="341.90" y="220.80" font-family='"Liberation Serif", serif' font-weight="bold" font-size="7.94" fill="#2a2a2a" textLength="4.30" lengthAdjust="spacingAndGlyphs" stroke="#2a2a2a" stroke-width="0.3">A</text>
<rect x="13.3" y="256.0" width="361.0" height="255.0" fill="#ffffff" stroke="#8a877a" stroke-width="0.8"/>
<rect x="13.8" y="256.5" width="347.4" height="13.1" fill="#ecebe0"/>
<rect x="21.2" y="268.4" width="340.0" height="1.4" fill="#3a3a36"/>
<rect x="13.8" y="269.6" width="7.4" height="232.5" fill="#ecebe0"/>
<rect x="21.2" y="280.07" width="340.0" height="0.7" fill="#cfcfcf"/>
<rect x="13.8" y="279.67" width="7.4" height="1.2" fill="#5a5a55"/>
<rect x="21.2" y="291.14" width="340.0" height="0.7" fill="#cfcfcf"/>
<rect x="13.8" y="290.74" width="7.4" height="1.2" fill="#5a5a55"/>
<rect x="21.2" y="302.21" width="340.0" height="0.7" fill="#cfcfcf"/>
<rect x="13.8" y="301.81" width="7.4" height="1.2" fill="#5a5a55"/>
<rect x="21.2" y="313.28" width="340.0" height="0.7" fill="#cfcfcf"/>
<rect x="13.8" y="312.88" width="7.4" height="1.2" fill="#5a5a55"/>
<rect x="21.2" y="324.35" width="340.0" height="0.7" fill="#cfcfcf"/>
<rect x="13.8" y="323.95" width="7.4" height="1.2" fill="#5a5a55"/>
<rect x="21.2" y="335.42" width="340.0" height="0.7" fill="#cfcfcf"/>
<rect x="13.8" y="335.02" width="7.4" height="1.2" fill="#5a5a55"/>
<rect x="21.2" y="346.49" width="340.0" height="0.7" fill="#cfcfcf"/>
<rect x="13.8" y="346.09" width="7.4" height="1.2" fill="#5a5a55"/>
<rect x="21.2" y="357.56" width="340.0" height="0.7" fill="#cfcfcf"/>
<rect x="13.8" y="357.16" width="7.4" height="1.2" fill="#5a5a55"/>
<rect x="21.2" y="368.63" width="340.0" height="0.7" fill="#cfcfcf"/>
<rect x="13.8" y="368.23" width="7.4" height="1.2" fill="#5a5a55"/>
<rect x="21.2" y="379.70" width="340.0" height="0.7" fill="#cfcfcf"/>
<rect x="13.8" y="379.30" width="7.4" height="1.2" fill="#5a5a55"/>
<rect x="21.2" y="390.77" width="340.0" height="0.7" fill="#cfcfcf"/>
<rect x="13.8" y="390.37" width="7.4" height="1.2" fill="#5a5a55"/>
<rect x="21.2" y="401.84" width="340.0" height="0.7" fill="#cfcfcf"/>
<rect x="13.8" y="401.44" width="7.4" height="1.2" fill="#5a5a55"/>
<rect x="21.2" y="412.91" width="340.0" height="0.7" fill="#cfcfcf"/>
<rect x="13.8" y="412.51" width="7.4" height="1.2" fill="#5a5a55"/>
<rect x="21.2" y="423.98" width="340.0" height="0.7" fill="#cfcfcf"/>
<rect x="13.8" y="423.58" width="7.4" height="1.2" fill="#5a5a55"/>
<rect x="21.2" y="435.05" width="340.0" height="0.7" fill="#cfcfcf"/>
<rect x="13.8" y="434.65" width="7.4" height="1.2" fill="#5a5a55"/>
<rect x="21.2" y="446.12" width="340.0" height="0.7" fill="#cfcfcf"/>
<rect x="13.8" y="445.72" width="7.4" height="1.2" fill="#5a5a55"/>
<rect x="21.2" y="457.19" width="340.0" height="0.7" fill="#cfcfcf"/>
<rect x="13.8" y="456.79" width="7.4" height="1.2" fill="#5a5a55"/>
<rect x="21.2" y="468.26" width="340.0" height="0.7" fill="#cfcfcf"/>
<rect x="13.8" y="467.86" width="7.4" height="1.2" fill="#5a5a55"/>
<rect x="21.2" y="479.33" width="340.0" height="0.7" fill="#cfcfcf"/>
<rect x="13.8" y="478.93" width="7.4" height="1.2" fill="#5a5a55"/>
<rect x="21.2" y="490.40" width="340.0" height="0.7" fill="#cfcfcf"/>
<rect x="13.8" y="490.00" width="7.4" height="1.2" fill="#5a5a55"/>
<rect x="21.2" y="501.47" width="340.0" height="0.7" fill="#cfcfcf"/>
<rect x="13.8" y="501.07" width="7.4" height="1.2" fill="#5a5a55"/>
<rect x="20.70" y="269.60" width="0.7" height="232.47" fill="#cfcfcf"/>
<rect x="20.20" y="257.00" width="1.4" height="12.60" fill="#3a3a36"/>
<rect x="46.00" y="269.60" width="0.7" height="232.47" fill="#cfcfcf"/>
<rect x="45.50" y="257.00" width="1.4" height="12.60" fill="#3a3a36"/>
<rect x="80.30" y="269.60" width="0.7" height="232.47" fill="#cfcfcf"/>
<rect x="79.80" y="257.00" width="1.4" height="12.60" fill="#3a3a36"/>
<rect x="124.20" y="269.60" width="0.7" height="232.47" fill="#cfcfcf"/>
<rect x="123.70" y="257.00" width="1.4" height="12.60" fill="#3a3a36"/>
<rect x="170.80" y="269.60" width="0.7" height="232.47" fill="#cfcfcf"/>
<rect x="170.30" y="257.00" width="1.4" height="12.60" fill="#3a3a36"/>
<rect x="214.10" y="269.60" width="0.7" height="232.47" fill="#cfcfcf"/>
<rect x="213.60" y="257.00" width="1.4" height="12.60" fill="#3a3a36"/>
<rect x="261.30" y="269.60" width="0.7" height="232.47" fill="#cfcfcf"/>
<rect x="260.80" y="257.00" width="1.4" height="12.60" fill="#3a3a36"/>
<rect x="311.00" y="269.60" width="0.7" height="232.47" fill="#cfcfcf"/>
<rect x="310.50" y="257.00" width="1.4" height="12.60" fill="#3a3a36"/>
<rect x="360.70" y="269.60" width="0.7" height="232.47" fill="#cfcfcf"/>
<rect x="360.20" y="257.00" width="1.4" height="12.60" fill="#3a3a36"/>
<rect x="20.2" y="269.60" width="1.4" height="232.47" fill="#3a3a36"/>
<rect x="13.6" y="256.50" width="0.9" height="245.57" fill="#9a988c"/>
<text x="25.40" y="265.80" font-family='"Liberation Sans", sans-serif' font-weight="bold" font-size="10.03" fill="#1a1a1a" textLength="16.30" lengthAdjust="spacingAndGlyphs" stroke="#1a1a1a" stroke-width="0.3">Step</text>
<text x="54.60" y="265.80" font-family='"Liberation Sans", sans-serif' font-weight="bold" font-size="10.03" fill="#1a1a1a" textLength="17.20" lengthAdjust="spacingAndGlyphs" stroke="#1a1a1a" stroke-width="0.3">Time</text>
<text x="90.40" y="265.80" font-family='"Liberation Sans", sans-serif' font-weight="bold" font-size="10.03" fill="#1a1a1a" textLength="25.10" lengthAdjust="spacingAndGlyphs" stroke="#1a1a1a" stroke-width="0.3">Speed</text>
<text x="134.00" y="265.80" font-family='"Liberation Sans", sans-serif' font-weight="bold" font-size="10.03" fill="#1a1a1a" textLength="28.70" lengthAdjust="spacingAndGlyphs" stroke="#1a1a1a" stroke-width="0.3">Current</text>
<text x="179.90" y="265.80" font-family='"Liberation Sans", sans-serif' font-weight="bold" font-size="10.03" fill="#1a1a1a" textLength="26.80" lengthAdjust="spacingAndGlyphs" stroke="#1a1a1a" stroke-width="0.3">Torque</text>
<text x="232.00" y="265.80" font-family='"Liberation Sans", sans-serif' font-weight="bold" font-size="10.03" fill="#1a1a1a" textLength="12.40" lengthAdjust="spacingAndGlyphs" stroke="#1a1a1a" stroke-width="0.3">Pin</text>
<text x="278.00" y="265.80" font-family='"Liberation Sans", sans-serif' font-weight="bold" font-size="10.03" fill="#1a1a1a" textLength="18.00" lengthAdjust="spacingAndGlyphs" stroke="#1a1a1a" stroke-width="0.3">Pout</text>
<text x="312.00" y="265.80" font-family='"Liberation Sans", sans-serif' font-weight="bold" font-size="10.03" fill="#1a1a1a" textLength="43.70" lengthAdjust="spacingAndGlyphs" stroke="#1a1a1a" stroke-width="0.3">Efficiency</text>
<text x="34.35" y="278.90" font-family='"Liberation Sans", sans-serif' font-weight="normal" font-size="9.40" fill="#1a1a1a" text-anchor="middle" textLength="12.0" lengthAdjust="spacingAndGlyphs">107</text>
<text x="79.20" y="278.90" font-family='"Liberation Sans", sans-serif' font-weight="normal" font-size="9.40" fill="#222" text-anchor="end" textLength="17.2" lengthAdjust="spacingAndGlyphs">10.75</text>
<text x="123.10" y="278.90" font-family='"Liberation Sans", sans-serif' font-weight="normal" font-size="9.40" fill="#222" text-anchor="end" textLength="11.6" lengthAdjust="spacingAndGlyphs">250</text>
<text x="169.70" y="278.90" font-family='"Liberation Sans", sans-serif' font-weight="normal" font-size="9.40" fill="#222" text-anchor="end" textLength="13.3" lengthAdjust="spacingAndGlyphs">2.49</text>
<text x="213.00" y="278.90" font-family='"Liberation Sans", sans-serif' font-weight="normal" font-size="9.40" fill="#222" text-anchor="end" textLength="13.3" lengthAdjust="spacingAndGlyphs">1.49</text>
<text x="260.20" y="278.90" font-family='"Liberation Sans", sans-serif' font-weight="normal" font-size="9.40" fill="#222" text-anchor="end" textLength="13.3" lengthAdjust="spacingAndGlyphs">69.6</text>
<text x="309.90" y="278.90" font-family='"Liberation Sans", sans-serif' font-weight="normal" font-size="9.40" fill="#222" text-anchor="end" textLength="7.7" lengthAdjust="spacingAndGlyphs">39</text>
<text x="359.60" y="278.90" font-family='"Liberation Sans", sans-serif' font-weight="normal" font-size="9.40" fill="#222" text-anchor="end" textLength="7.7" lengthAdjust="spacingAndGlyphs">56</text>
<text x="34.35" y="289.97" font-family='"Liberation Sans", sans-serif' font-weight="normal" font-size="9.40" fill="#1a1a1a" text-anchor="middle" textLength="12.0" lengthAdjust="spacingAndGlyphs">108</text>
<text x="79.20" y="289.97" font-family='"Liberation Sans", sans-serif' font-weight="normal" font-size="9.40" fill="#222" text-anchor="end" textLength="17.2" lengthAdjust="spacingAndGlyphs">10.86</text>
<text x="123.10" y="289.97" font-family='"Liberation Sans", sans-serif' font-weight="normal" font-size="9.40" fill="#222" text-anchor="end" textLength="11.6" lengthAdjust="spacingAndGlyphs">248</text>
<text x="169.70" y="289.97" font-family='"Liberation Sans", sans-serif' font-weight="normal" font-size="9.40" fill="#222" text-anchor="end" textLength="13.3" lengthAdjust="spacingAndGlyphs">2.56</text>
<text x="213.00" y="289.97" font-family='"Liberation Sans", sans-serif' font-weight="normal" font-size="9.40" fill="#222" text-anchor="end" textLength="13.3" lengthAdjust="spacingAndGlyphs">1.52</text>
<text x="260.20" y="289.97" font-family='"Liberation Sans", sans-serif' font-weight="normal" font-size="9.40" fill="#222" text-anchor="end" textLength="13.3" lengthAdjust="spacingAndGlyphs">71.7</text>
<text x="309.90" y="289.97" font-family='"Liberation Sans", sans-serif' font-weight="normal" font-size="9.40" fill="#222" text-anchor="end" textLength="13.3" lengthAdjust="spacingAndGlyphs">39.5</text>
<text x="359.60" y="289.97" font-family='"Liberation Sans", sans-serif' font-weight="normal" font-size="9.40" fill="#222" text-anchor="end" textLength="7.7" lengthAdjust="spacingAndGlyphs">55</text>
<text x="34.35" y="301.04" font-family='"Liberation Sans", sans-serif' font-weight="normal" font-size="9.40" fill="#1a1a1a" text-anchor="middle" textLength="12.0" lengthAdjust="spacingAndGlyphs">109</text>
<text x="79.20" y="301.04" font-family='"Liberation Sans", sans-serif' font-weight="normal" font-size="9.40" fill="#222" text-anchor="end" textLength="17.2" lengthAdjust="spacingAndGlyphs">10.86</text>
<text x="123.10" y="301.04" font-family='"Liberation Sans", sans-serif' font-weight="normal" font-size="9.40" fill="#222" text-anchor="end" textLength="11.6" lengthAdjust="spacingAndGlyphs">245</text>
<text x="169.70" y="301.04" font-family='"Liberation Sans", sans-serif' font-weight="normal" font-size="9.40" fill="#222" text-anchor="end" textLength="13.3" lengthAdjust="spacingAndGlyphs">2.63</text>
<text x="213.00" y="301.04" font-family='"Liberation Sans", sans-serif' font-weight="normal" font-size="9.40" fill="#222" text-anchor="end" textLength="13.3" lengthAdjust="spacingAndGlyphs">1.59</text>
<text x="260.20" y="301.04" font-family='"Liberation Sans", sans-serif' font-weight="normal" font-size="9.40" fill="#222" text-anchor="end" textLength="13.3" lengthAdjust="spacingAndGlyphs">73.7</text>
<text x="309.90" y="301.04" font-family='"Liberation Sans", sans-serif' font-weight="normal" font-size="9.40" fill="#222" text-anchor="end" textLength="13.3" lengthAdjust="spacingAndGlyphs">40.8</text>
<text x="359.60" y="301.04" font-family='"Liberation Sans", sans-serif' font-weight="normal" font-size="9.40" fill="#222" text-anchor="end" textLength="13.3" lengthAdjust="spacingAndGlyphs">55.3</text>
<text x="34.35" y="312.11" font-family='"Liberation Sans", sans-serif' font-weight="normal" font-size="9.40" fill="#1a1a1a" text-anchor="middle" textLength="12.0" lengthAdjust="spacingAndGlyphs">110</text>
<text x="79.20" y="312.11" font-family='"Liberation Sans", sans-serif' font-weight="normal" font-size="9.40" fill="#222" text-anchor="end" textLength="17.2" lengthAdjust="spacingAndGlyphs">10.98</text>
<text x="123.10" y="312.11" font-family='"Liberation Sans", sans-serif' font-weight="normal" font-size="9.40" fill="#222" text-anchor="end" textLength="11.6" lengthAdjust="spacingAndGlyphs">243</text>
<text x="169.70" y="312.11" font-family='"Liberation Sans", sans-serif' font-weight="normal" font-size="9.40" fill="#222" text-anchor="end" textLength="13.3" lengthAdjust="spacingAndGlyphs">2.75</text>
<text x="213.00" y="312.11" font-family='"Liberation Sans", sans-serif' font-weight="normal" font-size="9.40" fill="#222" text-anchor="end" textLength="9.5" lengthAdjust="spacingAndGlyphs">1.6</text>
<text x="260.20" y="312.11" font-family='"Liberation Sans", sans-serif' font-weight="normal" font-size="9.40" fill="#222" text-anchor="end" textLength="13.3" lengthAdjust="spacingAndGlyphs">77.1</text>
<text x="309.90" y="312.11" font-family='"Liberation Sans", sans-serif' font-weight="normal" font-size="9.40" fill="#222" text-anchor="end" textLength="13.3" lengthAdjust="spacingAndGlyphs">40.7</text>
<text x="359.60" y="312.11" font-family='"Liberation Sans", sans-serif' font-weight="normal" font-size="9.40" fill="#222" text-anchor="end" textLength="13.3" lengthAdjust="spacingAndGlyphs">52.8</text>
<text x="34.35" y="323.18" font-family='"Liberation Sans", sans-serif' font-weight="normal" font-size="9.40" fill="#1a1a1a" text-anchor="middle" textLength="12.0" lengthAdjust="spacingAndGlyphs">111</text>
<text x="79.20" y="323.18" font-family='"Liberation Sans", sans-serif' font-weight="normal" font-size="9.40" fill="#222" text-anchor="end" textLength="17.2" lengthAdjust="spacingAndGlyphs">11.09</text>
<text x="123.10" y="323.18" font-family='"Liberation Sans", sans-serif' font-weight="normal" font-size="9.40" fill="#222" text-anchor="end" textLength="11.6" lengthAdjust="spacingAndGlyphs">240</text>
<text x="169.70" y="323.18" font-family='"Liberation Sans", sans-serif' font-weight="normal" font-size="9.40" fill="#222" text-anchor="end" textLength="9.5" lengthAdjust="spacingAndGlyphs">2.8</text>
<text x="213.00" y="323.18" font-family='"Liberation Sans", sans-serif' font-weight="normal" font-size="9.40" fill="#222" text-anchor="end" textLength="13.3" lengthAdjust="spacingAndGlyphs">1.67</text>
<text x="260.20" y="323.18" font-family='"Liberation Sans", sans-serif' font-weight="normal" font-size="9.40" fill="#222" text-anchor="end" textLength="13.3" lengthAdjust="spacingAndGlyphs">78.4</text>
<text x="309.90" y="323.18" font-family='"Liberation Sans", sans-serif' font-weight="normal" font-size="9.40" fill="#222" text-anchor="end" textLength="7.7" lengthAdjust="spacingAndGlyphs">42</text>
<text x="359.60" y="323.18" font-family='"Liberation Sans", sans-serif' font-weight="normal" font-size="9.40" fill="#222" text-anchor="end" textLength="13.3" lengthAdjust="spacingAndGlyphs">53.5</text>
<text x="34.35" y="334.25" font-family='"Liberation Sans", sans-serif' font-weight="normal" font-size="9.40" fill="#1a1a1a" text-anchor="middle" textLength="12.0" lengthAdjust="spacingAndGlyphs">112</text>
<text x="79.20" y="334.25" font-family='"Liberation Sans", sans-serif' font-weight="normal" font-size="9.40" fill="#222" text-anchor="end" textLength="13.3" lengthAdjust="spacingAndGlyphs">11.2</text>
<text x="123.10" y="334.25" font-family='"Liberation Sans", sans-serif' font-weight="normal" font-size="9.40" fill="#222" text-anchor="end" textLength="11.6" lengthAdjust="spacingAndGlyphs">238</text>
<text x="169.70" y="334.25" font-family='"Liberation Sans", sans-serif' font-weight="normal" font-size="9.40" fill="#222" text-anchor="end" textLength="13.3" lengthAdjust="spacingAndGlyphs">2.87</text>
<text x="213.00" y="334.25" font-family='"Liberation Sans", sans-serif' font-weight="normal" font-size="9.40" fill="#222" text-anchor="end" textLength="9.5" lengthAdjust="spacingAndGlyphs">1.7</text>
<text x="260.20" y="334.25" font-family='"Liberation Sans", sans-serif' font-weight="normal" font-size="9.40" fill="#222" text-anchor="end" textLength="13.3" lengthAdjust="spacingAndGlyphs">80.3</text>
<text x="309.90" y="334.25" font-family='"Liberation Sans", sans-serif' font-weight="normal" font-size="9.40" fill="#222" text-anchor="end" textLength="13.3" lengthAdjust="spacingAndGlyphs">42.4</text>
<text x="359.60" y="334.25" font-family='"Liberation Sans", sans-serif' font-weight="normal" font-size="9.40" fill="#222" text-anchor="end" textLength="13.3" lengthAdjust="spacingAndGlyphs">52.8</text>
<text x="34.35" y="345.32" font-family='"Liberation Sans", sans-serif' font-weight="normal" font-size="9.40" fill="#1a1a1a" text-anchor="middle" textLength="12.0" lengthAdjust="spacingAndGlyphs">113</text>
<text x="79.20" y="345.32" font-family='"Liberation Sans", sans-serif' font-weight="normal" font-size="9.40" fill="#222" text-anchor="end" textLength="17.2" lengthAdjust="spacingAndGlyphs">11.31</text>
<text x="123.10" y="345.32" font-family='"Liberation Sans", sans-serif' font-weight="normal" font-size="9.40" fill="#222" text-anchor="end" textLength="11.6" lengthAdjust="spacingAndGlyphs">235</text>
<text x="169.70" y="345.32" font-family='"Liberation Sans", sans-serif' font-weight="normal" font-size="9.40" fill="#222" text-anchor="end" textLength="13.3" lengthAdjust="spacingAndGlyphs">2.95</text>
<text x="213.00" y="345.32" font-family='"Liberation Sans", sans-serif' font-weight="normal" font-size="9.40" fill="#222" text-anchor="end" textLength="13.3" lengthAdjust="spacingAndGlyphs">1.74</text>
<text x="260.20" y="345.32" font-family='"Liberation Sans", sans-serif' font-weight="normal" font-size="9.40" fill="#222" text-anchor="end" textLength="13.3" lengthAdjust="spacingAndGlyphs">82.5</text>
<text x="309.90" y="345.32" font-family='"Liberation Sans", sans-serif' font-weight="normal" font-size="9.40" fill="#222" text-anchor="end" textLength="13.3" lengthAdjust="spacingAndGlyphs">42.8</text>
<text x="359.60" y="345.32" font-family='"Liberation Sans", sans-serif' font-weight="normal" font-size="9.40" fill="#222" text-anchor="end" textLength="13.3" lengthAdjust="spacingAndGlyphs">51.9</text>
<text x="34.35" y="356.39" font-family='"Liberation Sans", sans-serif' font-weight="normal" font-size="9.40" fill="#1a1a1a" text-anchor="middle" textLength="12.0" lengthAdjust="spacingAndGlyphs">114</text>
<text x="79.20" y="356.39" font-family='"Liberation Sans", sans-serif' font-weight="normal" font-size="9.40" fill="#222" text-anchor="end" textLength="17.2" lengthAdjust="spacingAndGlyphs">11.44</text>
<text x="123.10" y="356.39" font-family='"Liberation Sans", sans-serif' font-weight="normal" font-size="9.40" fill="#222" text-anchor="end" textLength="11.6" lengthAdjust="spacingAndGlyphs">233</text>
<text x="169.70" y="356.39" font-family='"Liberation Sans", sans-serif' font-weight="normal" font-size="9.40" fill="#222" text-anchor="end" textLength="13.3" lengthAdjust="spacingAndGlyphs">3.03</text>
<text x="213.00" y="356.39" font-family='"Liberation Sans", sans-serif' font-weight="normal" font-size="9.40" fill="#222" text-anchor="end" textLength="9.5" lengthAdjust="spacingAndGlyphs">1.8</text>
<text x="260.20" y="356.39" font-family='"Liberation Sans", sans-serif' font-weight="normal" font-size="9.40" fill="#222" text-anchor="end" textLength="13.3" lengthAdjust="spacingAndGlyphs">84.8</text>
<text x="309.90" y="356.39" font-family='"Liberation Sans", sans-serif' font-weight="normal" font-size="9.40" fill="#222" text-anchor="end" textLength="13.3" lengthAdjust="spacingAndGlyphs">43.9</text>
<text x="359.60" y="356.39" font-family='"Liberation Sans", sans-serif' font-weight="normal" font-size="9.40" fill="#222" text-anchor="end" textLength="13.3" lengthAdjust="spacingAndGlyphs">51.8</text>
<text x="34.35" y="367.46" font-family='"Liberation Sans", sans-serif' font-weight="normal" font-size="9.40" fill="#1a1a1a" text-anchor="middle" textLength="12.0" lengthAdjust="spacingAndGlyphs">115</text>
<text x="79.20" y="367.46" font-family='"Liberation Sans", sans-serif' font-weight="normal" font-size="9.40" fill="#222" text-anchor="end" textLength="17.2" lengthAdjust="spacingAndGlyphs">11.55</text>
<text x="123.10" y="367.46" font-family='"Liberation Sans", sans-serif' font-weight="normal" font-size="9.40" fill="#222" text-anchor="end" textLength="11.6" lengthAdjust="spacingAndGlyphs">230</text>
<text x="169.70" y="367.46" font-family='"Liberation Sans", sans-serif' font-weight="normal" font-size="9.40" fill="#222" text-anchor="end" textLength="13.3" lengthAdjust="spacingAndGlyphs">3.06</text>
<text x="213.00" y="367.46" font-family='"Liberation Sans", sans-serif' font-weight="normal" font-size="9.40" fill="#222" text-anchor="end" textLength="13.3" lengthAdjust="spacingAndGlyphs">1.81</text>
<text x="260.20" y="367.46" font-family='"Liberation Sans", sans-serif' font-weight="normal" font-size="9.40" fill="#222" text-anchor="end" textLength="13.3" lengthAdjust="spacingAndGlyphs">85.6</text>
<text x="309.90" y="367.46" font-family='"Liberation Sans", sans-serif' font-weight="normal" font-size="9.40" fill="#222" text-anchor="end" textLength="13.3" lengthAdjust="spacingAndGlyphs">43.6</text>
<text x="359.60" y="367.46" font-family='"Liberation Sans", sans-serif' font-weight="normal" font-size="9.40" fill="#222" text-anchor="end" textLength="13.3" lengthAdjust="spacingAndGlyphs">50.9</text>
<text x="34.35" y="378.53" font-family='"Liberation Sans", sans-serif' font-weight="normal" font-size="9.40" fill="#1a1a1a" text-anchor="middle" textLength="12.0" lengthAdjust="spacingAndGlyphs">116</text>
<text x="79.20" y="378.53" font-family='"Liberation Sans", sans-serif' font-weight="normal" font-size="9.40" fill="#222" text-anchor="end" textLength="17.2" lengthAdjust="spacingAndGlyphs">11.66</text>
<text x="123.10" y="378.53" font-family='"Liberation Sans", sans-serif' font-weight="normal" font-size="9.40" fill="#222" text-anchor="end" textLength="11.6" lengthAdjust="spacingAndGlyphs">228</text>
<text x="169.70" y="378.53" font-family='"Liberation Sans", sans-serif' font-weight="normal" font-size="9.40" fill="#222" text-anchor="end" textLength="13.3" lengthAdjust="spacingAndGlyphs">3.16</text>
<text x="213.00" y="378.53" font-family='"Liberation Sans", sans-serif' font-weight="normal" font-size="9.40" fill="#222" text-anchor="end" textLength="13.3" lengthAdjust="spacingAndGlyphs">1.89</text>
<text x="260.20" y="378.53" font-family='"Liberation Sans", sans-serif' font-weight="normal" font-size="9.40" fill="#222" text-anchor="end" textLength="13.3" lengthAdjust="spacingAndGlyphs">88.5</text>
<text x="309.90" y="378.53" font-family='"Liberation Sans", sans-serif' font-weight="normal" font-size="9.40" fill="#222" text-anchor="end" textLength="13.3" lengthAdjust="spacingAndGlyphs">45.1</text>
<text x="359.60" y="378.53" font-family='"Liberation Sans", sans-serif' font-weight="normal" font-size="9.40" fill="#222" text-anchor="end" textLength="7.7" lengthAdjust="spacingAndGlyphs">51</text>
<text x="34.35" y="389.60" font-family='"Liberation Sans", sans-serif' font-weight="normal" font-size="9.40" fill="#1a1a1a" text-anchor="middle" textLength="12.0" lengthAdjust="spacingAndGlyphs">117</text>
<text x="79.20" y="389.60" font-family='"Liberation Sans", sans-serif' font-weight="normal" font-size="9.40" fill="#222" text-anchor="end" textLength="17.2" lengthAdjust="spacingAndGlyphs">11.67</text>
<text x="123.10" y="389.60" font-family='"Liberation Sans", sans-serif' font-weight="normal" font-size="9.40" fill="#222" text-anchor="end" textLength="11.6" lengthAdjust="spacingAndGlyphs">225</text>
<text x="169.70" y="389.60" font-family='"Liberation Sans", sans-serif' font-weight="normal" font-size="9.40" fill="#222" text-anchor="end" textLength="13.3" lengthAdjust="spacingAndGlyphs">3.19</text>
<text x="213.00" y="389.60" font-family='"Liberation Sans", sans-serif' font-weight="normal" font-size="9.40" fill="#222" text-anchor="end" textLength="13.3" lengthAdjust="spacingAndGlyphs">1.92</text>
<text x="260.20" y="389.60" font-family='"Liberation Sans", sans-serif' font-weight="normal" font-size="9.40" fill="#222" text-anchor="end" textLength="13.3" lengthAdjust="spacingAndGlyphs">89.3</text>
<text x="309.90" y="389.60" font-family='"Liberation Sans", sans-serif' font-weight="normal" font-size="9.40" fill="#222" text-anchor="end" textLength="13.3" lengthAdjust="spacingAndGlyphs">45.2</text>
<text x="359.60" y="389.60" font-family='"Liberation Sans", sans-serif' font-weight="normal" font-size="9.40" fill="#222" text-anchor="end" textLength="13.3" lengthAdjust="spacingAndGlyphs">50.6</text>
<text x="34.35" y="400.67" font-family='"Liberation Sans", sans-serif' font-weight="normal" font-size="9.40" fill="#1a1a1a" text-anchor="middle" textLength="12.0" lengthAdjust="spacingAndGlyphs">118</text>
<text x="79.20" y="400.67" font-family='"Liberation Sans", sans-serif' font-weight="normal" font-size="9.40" fill="#222" text-anchor="end" textLength="17.2" lengthAdjust="spacingAndGlyphs">11.78</text>
<text x="123.10" y="400.67" font-family='"Liberation Sans", sans-serif' font-weight="normal" font-size="9.40" fill="#222" text-anchor="end" textLength="11.6" lengthAdjust="spacingAndGlyphs">222</text>
<text x="169.70" y="400.67" font-family='"Liberation Sans", sans-serif' font-weight="normal" font-size="9.40" fill="#222" text-anchor="end" textLength="13.3" lengthAdjust="spacingAndGlyphs">3.31</text>
<text x="213.00" y="400.67" font-family='"Liberation Sans", sans-serif' font-weight="normal" font-size="9.40" fill="#222" text-anchor="end" textLength="13.3" lengthAdjust="spacingAndGlyphs">1.95</text>
<text x="260.20" y="400.67" font-family='"Liberation Sans", sans-serif' font-weight="normal" font-size="9.40" fill="#222" text-anchor="end" textLength="13.3" lengthAdjust="spacingAndGlyphs">92.6</text>
<text x="309.90" y="400.67" font-family='"Liberation Sans", sans-serif' font-weight="normal" font-size="9.40" fill="#222" text-anchor="end" textLength="13.3" lengthAdjust="spacingAndGlyphs">45.3</text>
<text x="359.60" y="400.67" font-family='"Liberation Sans", sans-serif' font-weight="normal" font-size="9.40" fill="#222" text-anchor="end" textLength="7.7" lengthAdjust="spacingAndGlyphs">49</text>
<text x="34.35" y="411.74" font-family='"Liberation Sans", sans-serif' font-weight="normal" font-size="9.40" fill="#1a1a1a" text-anchor="middle" textLength="12.0" lengthAdjust="spacingAndGlyphs">119</text>
<text x="79.20" y="411.74" font-family='"Liberation Sans", sans-serif' font-weight="normal" font-size="9.40" fill="#222" text-anchor="end" textLength="17.2" lengthAdjust="spacingAndGlyphs">11.89</text>
<text x="123.10" y="411.74" font-family='"Liberation Sans", sans-serif' font-weight="normal" font-size="9.40" fill="#222" text-anchor="end" textLength="11.6" lengthAdjust="spacingAndGlyphs">220</text>
<text x="169.70" y="411.74" font-family='"Liberation Sans", sans-serif' font-weight="normal" font-size="9.40" fill="#222" text-anchor="end" textLength="13.3" lengthAdjust="spacingAndGlyphs">3.38</text>
<text x="213.00" y="411.74" font-family='"Liberation Sans", sans-serif' font-weight="normal" font-size="9.40" fill="#222" text-anchor="end" textLength="13.3" lengthAdjust="spacingAndGlyphs">2.02</text>
<text x="260.20" y="411.74" font-family='"Liberation Sans", sans-serif' font-weight="normal" font-size="9.40" fill="#222" text-anchor="end" textLength="13.3" lengthAdjust="spacingAndGlyphs">94.7</text>
<text x="309.90" y="411.74" font-family='"Liberation Sans", sans-serif' font-weight="normal" font-size="9.40" fill="#222" text-anchor="end" textLength="13.3" lengthAdjust="spacingAndGlyphs">46.5</text>
<text x="359.60" y="411.74" font-family='"Liberation Sans", sans-serif' font-weight="normal" font-size="9.40" fill="#222" text-anchor="end" textLength="13.3" lengthAdjust="spacingAndGlyphs">49.2</text>
<text x="34.35" y="422.81" font-family='"Liberation Sans", sans-serif' font-weight="normal" font-size="9.40" fill="#1a1a1a" text-anchor="middle" textLength="12.0" lengthAdjust="spacingAndGlyphs">120</text>
<text x="79.20" y="422.81" font-family='"Liberation Sans", sans-serif' font-weight="normal" font-size="9.40" fill="#222" text-anchor="end" textLength="7.7" lengthAdjust="spacingAndGlyphs">12</text>
<text x="123.10" y="422.81" font-family='"Liberation Sans", sans-serif' font-weight="normal" font-size="9.40" fill="#222" text-anchor="end" textLength="11.6" lengthAdjust="spacingAndGlyphs">217</text>
<text x="169.70" y="422.81" font-family='"Liberation Sans", sans-serif' font-weight="normal" font-size="9.40" fill="#222" text-anchor="end" textLength="13.3" lengthAdjust="spacingAndGlyphs">3.43</text>
<text x="213.00" y="422.81" font-family='"Liberation Sans", sans-serif' font-weight="normal" font-size="9.40" fill="#222" text-anchor="end" textLength="13.3" lengthAdjust="spacingAndGlyphs">2.04</text>
<text x="260.20" y="422.81" font-family='"Liberation Sans", sans-serif' font-weight="normal" font-size="9.40" fill="#222" text-anchor="end" textLength="13.3" lengthAdjust="spacingAndGlyphs">96.1</text>
<text x="309.90" y="422.81" font-family='"Liberation Sans", sans-serif' font-weight="normal" font-size="9.40" fill="#222" text-anchor="end" textLength="13.3" lengthAdjust="spacingAndGlyphs">46.4</text>
<text x="359.60" y="422.81" font-family='"Liberation Sans", sans-serif' font-weight="normal" font-size="9.40" fill="#222" text-anchor="end" textLength="13.3" lengthAdjust="spacingAndGlyphs">48.2</text>
<text x="34.35" y="433.88" font-family='"Liberation Sans", sans-serif' font-weight="normal" font-size="9.40" fill="#1a1a1a" text-anchor="middle" textLength="12.0" lengthAdjust="spacingAndGlyphs">121</text>
<text x="79.20" y="433.88" font-family='"Liberation Sans", sans-serif' font-weight="normal" font-size="9.40" fill="#222" text-anchor="end" textLength="17.2" lengthAdjust="spacingAndGlyphs">12.11</text>
<text x="123.10" y="433.88" font-family='"Liberation Sans", sans-serif' font-weight="normal" font-size="9.40" fill="#222" text-anchor="end" textLength="11.6" lengthAdjust="spacingAndGlyphs">215</text>
<text x="169.70" y="433.88" font-family='"Liberation Sans", sans-serif' font-weight="normal" font-size="9.40" fill="#222" text-anchor="end" textLength="13.3" lengthAdjust="spacingAndGlyphs">3.47</text>
<text x="213.00" y="433.88" font-family='"Liberation Sans", sans-serif' font-weight="normal" font-size="9.40" fill="#222" text-anchor="end" textLength="13.3" lengthAdjust="spacingAndGlyphs">2.09</text>
<text x="260.20" y="433.88" font-family='"Liberation Sans", sans-serif' font-weight="normal" font-size="9.40" fill="#222" text-anchor="end" textLength="13.3" lengthAdjust="spacingAndGlyphs">97.3</text>
<text x="309.90" y="433.88" font-family='"Liberation Sans", sans-serif' font-weight="normal" font-size="9.40" fill="#222" text-anchor="end" textLength="13.3" lengthAdjust="spacingAndGlyphs">47.1</text>
<text x="359.60" y="433.88" font-family='"Liberation Sans", sans-serif' font-weight="normal" font-size="9.40" fill="#222" text-anchor="end" textLength="13.3" lengthAdjust="spacingAndGlyphs">48.4</text>
<text x="34.35" y="444.95" font-family='"Liberation Sans", sans-serif' font-weight="normal" font-size="9.40" fill="#1a1a1a" text-anchor="middle" textLength="12.0" lengthAdjust="spacingAndGlyphs">122</text>
<text x="79.20" y="444.95" font-family='"Liberation Sans", sans-serif' font-weight="normal" font-size="9.40" fill="#222" text-anchor="end" textLength="17.2" lengthAdjust="spacingAndGlyphs">12.23</text>
<text x="123.10" y="444.95" font-family='"Liberation Sans", sans-serif' font-weight="normal" font-size="9.40" fill="#222" text-anchor="end" textLength="11.6" lengthAdjust="spacingAndGlyphs">211</text>
<text x="169.70" y="444.95" font-family='"Liberation Sans", sans-serif' font-weight="normal" font-size="9.40" fill="#222" text-anchor="end" textLength="13.3" lengthAdjust="spacingAndGlyphs">3.56</text>
<text x="213.00" y="444.95" font-family='"Liberation Sans", sans-serif' font-weight="normal" font-size="9.40" fill="#222" text-anchor="end" textLength="13.3" lengthAdjust="spacingAndGlyphs">2.15</text>
<text x="260.20" y="444.95" font-family='"Liberation Sans", sans-serif' font-weight="normal" font-size="9.40" fill="#222" text-anchor="end" textLength="13.3" lengthAdjust="spacingAndGlyphs">99.6</text>
<text x="309.90" y="444.95" font-family='"Liberation Sans", sans-serif' font-weight="normal" font-size="9.40" fill="#222" text-anchor="end" textLength="13.3" lengthAdjust="spacingAndGlyphs">47.5</text>
<text x="359.60" y="444.95" font-family='"Liberation Sans", sans-serif' font-weight="normal" font-size="9.40" fill="#222" text-anchor="end" textLength="13.3" lengthAdjust="spacingAndGlyphs">47.7</text>
<text x="34.35" y="456.02" font-family='"Liberation Sans", sans-serif' font-weight="normal" font-size="9.40" fill="#1a1a1a" text-anchor="middle" textLength="12.0" lengthAdjust="spacingAndGlyphs">123</text>
<text x="79.20" y="456.02" font-family='"Liberation Sans", sans-serif' font-weight="normal" font-size="9.40" fill="#222" text-anchor="end" textLength="17.2" lengthAdjust="spacingAndGlyphs">12.34</text>
<text x="123.10" y="456.02" font-family='"Liberation Sans", sans-serif' font-weight="normal" font-size="9.40" fill="#222" text-anchor="end" textLength="11.6" lengthAdjust="spacingAndGlyphs">209</text>
<text x="169.70" y="456.02" font-family='"Liberation Sans", sans-serif' font-weight="normal" font-size="9.40" fill="#222" text-anchor="end" textLength="13.3" lengthAdjust="spacingAndGlyphs">3.62</text>
<text x="213.00" y="456.02" font-family='"Liberation Sans", sans-serif' font-weight="normal" font-size="9.40" fill="#222" text-anchor="end" textLength="13.3" lengthAdjust="spacingAndGlyphs">2.16</text>
<text x="260.20" y="456.02" font-family='"Liberation Sans", sans-serif' font-weight="normal" font-size="9.40" fill="#222" text-anchor="end" textLength="17.2" lengthAdjust="spacingAndGlyphs">101.2</text>
<text x="309.90" y="456.02" font-family='"Liberation Sans", sans-serif' font-weight="normal" font-size="9.40" fill="#222" text-anchor="end" textLength="13.3" lengthAdjust="spacingAndGlyphs">47.3</text>
<text x="359.60" y="456.02" font-family='"Liberation Sans", sans-serif' font-weight="normal" font-size="9.40" fill="#222" text-anchor="end" textLength="13.3" lengthAdjust="spacingAndGlyphs">46.7</text>
<text x="34.35" y="467.09" font-family='"Liberation Sans", sans-serif' font-weight="normal" font-size="9.40" fill="#1a1a1a" text-anchor="middle" textLength="12.0" lengthAdjust="spacingAndGlyphs">124</text>
<text x="79.20" y="467.09" font-family='"Liberation Sans", sans-serif' font-weight="normal" font-size="9.40" fill="#222" text-anchor="end" textLength="17.2" lengthAdjust="spacingAndGlyphs">12.47</text>
<text x="123.10" y="467.09" font-family='"Liberation Sans", sans-serif' font-weight="normal" font-size="9.40" fill="#222" text-anchor="end" textLength="11.6" lengthAdjust="spacingAndGlyphs">207</text>
<text x="169.70" y="467.09" font-family='"Liberation Sans", sans-serif' font-weight="normal" font-size="9.40" fill="#222" text-anchor="end" textLength="13.3" lengthAdjust="spacingAndGlyphs">3.74</text>
<text x="213.00" y="467.09" font-family='"Liberation Sans", sans-serif' font-weight="normal" font-size="9.40" fill="#222" text-anchor="end" textLength="13.3" lengthAdjust="spacingAndGlyphs">2.22</text>
<text x="260.20" y="467.09" font-family='"Liberation Sans", sans-serif' font-weight="normal" font-size="9.40" fill="#222" text-anchor="end" textLength="17.2" lengthAdjust="spacingAndGlyphs">104.6</text>
<text x="309.90" y="467.09" font-family='"Liberation Sans", sans-serif' font-weight="normal" font-size="9.40" fill="#222" text-anchor="end" textLength="13.3" lengthAdjust="spacingAndGlyphs">48.1</text>
<text x="359.60" y="467.09" font-family='"Liberation Sans", sans-serif' font-weight="normal" font-size="9.40" fill="#222" text-anchor="end" textLength="7.7" lengthAdjust="spacingAndGlyphs">46</text>
<text x="34.35" y="478.16" font-family='"Liberation Sans", sans-serif' font-weight="normal" font-size="9.40" fill="#1a1a1a" text-anchor="middle" textLength="12.0" lengthAdjust="spacingAndGlyphs">125</text>
<text x="79.20" y="478.16" font-family='"Liberation Sans", sans-serif' font-weight="normal" font-size="9.40" fill="#222" text-anchor="end" textLength="17.2" lengthAdjust="spacingAndGlyphs">12.47</text>
<text x="123.10" y="478.16" font-family='"Liberation Sans", sans-serif' font-weight="normal" font-size="9.40" fill="#222" text-anchor="end" textLength="11.6" lengthAdjust="spacingAndGlyphs">204</text>
<text x="169.70" y="478.16" font-family='"Liberation Sans", sans-serif' font-weight="normal" font-size="9.40" fill="#222" text-anchor="end" textLength="13.3" lengthAdjust="spacingAndGlyphs">3.81</text>
<text x="213.00" y="478.16" font-family='"Liberation Sans", sans-serif' font-weight="normal" font-size="9.40" fill="#222" text-anchor="end" textLength="13.3" lengthAdjust="spacingAndGlyphs">2.28</text>
<text x="260.20" y="478.16" font-family='"Liberation Sans", sans-serif' font-weight="normal" font-size="9.40" fill="#222" text-anchor="end" textLength="17.2" lengthAdjust="spacingAndGlyphs">106.7</text>
<text x="309.90" y="478.16" font-family='"Liberation Sans", sans-serif' font-weight="normal" font-size="9.40" fill="#222" text-anchor="end" textLength="13.3" lengthAdjust="spacingAndGlyphs">48.7</text>
<text x="359.60" y="478.16" font-family='"Liberation Sans", sans-serif' font-weight="normal" font-size="9.40" fill="#222" text-anchor="end" textLength="13.3" lengthAdjust="spacingAndGlyphs">45.7</text>
<text x="34.35" y="489.23" font-family='"Liberation Sans", sans-serif' font-weight="normal" font-size="9.40" fill="#1a1a1a" text-anchor="middle" textLength="12.0" lengthAdjust="spacingAndGlyphs">126</text>
<text x="79.20" y="489.23" font-family='"Liberation Sans", sans-serif' font-weight="normal" font-size="9.40" fill="#222" text-anchor="end" textLength="17.2" lengthAdjust="spacingAndGlyphs">12.59</text>
<text x="123.10" y="489.23" font-family='"Liberation Sans", sans-serif' font-weight="normal" font-size="9.40" fill="#222" text-anchor="end" textLength="11.6" lengthAdjust="spacingAndGlyphs">201</text>
<text x="169.70" y="489.23" font-family='"Liberation Sans", sans-serif' font-weight="normal" font-size="9.40" fill="#222" text-anchor="end" textLength="13.3" lengthAdjust="spacingAndGlyphs">3.87</text>
<text x="213.00" y="489.23" font-family='"Liberation Sans", sans-serif' font-weight="normal" font-size="9.40" fill="#222" text-anchor="end" textLength="13.3" lengthAdjust="spacingAndGlyphs">2.29</text>
<text x="260.20" y="489.23" font-family='"Liberation Sans", sans-serif' font-weight="normal" font-size="9.40" fill="#222" text-anchor="end" textLength="17.2" lengthAdjust="spacingAndGlyphs">108.5</text>
<text x="309.90" y="489.23" font-family='"Liberation Sans", sans-serif' font-weight="normal" font-size="9.40" fill="#222" text-anchor="end" textLength="13.3" lengthAdjust="spacingAndGlyphs">48.2</text>
<text x="359.60" y="489.23" font-family='"Liberation Sans", sans-serif' font-weight="normal" font-size="9.40" fill="#222" text-anchor="end" textLength="13.3" lengthAdjust="spacingAndGlyphs">44.4</text>
<text x="34.35" y="500.30" font-family='"Liberation Sans", sans-serif' font-weight="normal" font-size="9.40" fill="#1a1a1a" text-anchor="middle" textLength="12.0" lengthAdjust="spacingAndGlyphs">127</text>
<text x="79.20" y="500.30" font-family='"Liberation Sans", sans-serif' font-weight="normal" font-size="9.40" fill="#222" text-anchor="end" textLength="13.3" lengthAdjust="spacingAndGlyphs">12.7</text>
<text x="123.10" y="500.30" font-family='"Liberation Sans", sans-serif' font-weight="normal" font-size="9.40" fill="#222" text-anchor="end" textLength="11.6" lengthAdjust="spacingAndGlyphs">199</text>
<text x="169.70" y="500.30" font-family='"Liberation Sans", sans-serif' font-weight="normal" font-size="9.40" fill="#222" text-anchor="end" textLength="13.3" lengthAdjust="spacingAndGlyphs">3.91</text>
<text x="213.00" y="500.30" font-family='"Liberation Sans", sans-serif' font-weight="normal" font-size="9.40" fill="#222" text-anchor="end" textLength="13.3" lengthAdjust="spacingAndGlyphs">2.35</text>
<text x="260.20" y="500.30" font-family='"Liberation Sans", sans-serif' font-weight="normal" font-size="9.40" fill="#222" text-anchor="end" textLength="17.2" lengthAdjust="spacingAndGlyphs">109.4</text>
<text x="309.90" y="500.30" font-family='"Liberation Sans", sans-serif' font-weight="normal" font-size="9.40" fill="#222" text-anchor="end" textLength="7.7" lengthAdjust="spacingAndGlyphs">49</text>
<text x="359.60" y="500.30" font-family='"Liberation Sans", sans-serif' font-weight="normal" font-size="9.40" fill="#222" text-anchor="end" textLength="13.3" lengthAdjust="spacingAndGlyphs">44.8</text>
<path d="M15.6 493.20l4 3.2l-4 3.2z" fill="#000"/>
<rect x="363.6" y="256.5" width="10.4" height="254" fill="#f4f2ea"/>
<rect x="363.8" y="257.5" width="10" height="10" rx="1" fill="#c8d8f6" stroke="#b0c4ea" stroke-width="0.5"/>
<path d="M366.3 264.2l2.6-2.8l2.6 2.8" fill="none" stroke="#2a3a6a" stroke-width="1.5"/>
<rect x="363.8" y="468" width="10" height="32" rx="1" fill="#c3d4f8" stroke="#aec3ec" stroke-width="0.5"/>
<rect x="363.8" y="500.7" width="10" height="10" rx="1" fill="#c8d8f6" stroke="#b0c4ea" stroke-width="0.5"/>
<path d="M366.3 504.0l2.6 2.8l2.6-2.8" fill="none" stroke="#2a3a6a" stroke-width="1.5"/>
<rect x="465.0" y="155.0" width="378.0" height="333.5" fill="#000000"/>
<rect x="465.0" y="471.43" width="378.0" height="0.8" fill="#1c1515"/>
<rect x="465.0" y="454.75" width="378.0" height="0.8" fill="#1c1515"/>
<rect x="465.0" y="438.08" width="378.0" height="0.8" fill="#1c1515"/>
<rect x="465.0" y="421.40" width="378.0" height="0.8" fill="#1c1515"/>
<rect x="465.0" y="404.73" width="378.0" height="0.8" fill="#1c1515"/>
<rect x="465.0" y="388.05" width="378.0" height="0.8" fill="#1c1515"/>
<rect x="465.0" y="371.38" width="378.0" height="0.8" fill="#1c1515"/>
<rect x="465.0" y="354.70" width="378.0" height="0.8" fill="#1c1515"/>
<rect x="465.0" y="338.03" width="378.0" height="0.8" fill="#1c1515"/>
<rect x="465.0" y="321.35" width="378.0" height="0.8" fill="#1c1515"/>
<rect x="465.0" y="304.68" width="378.0" height="0.8" fill="#1c1515"/>
<rect x="465.0" y="288.00" width="378.0" height="0.8" fill="#1c1515"/>
<rect x="465.0" y="271.33" width="378.0" height="0.8" fill="#1c1515"/>
<rect x="465.0" y="254.65" width="378.0" height="0.8" fill="#1c1515"/>
<rect x="465.0" y="237.97" width="378.0" height="0.8" fill="#1c1515"/>
<rect x="465.0" y="221.30" width="378.0" height="0.8" fill="#1c1515"/>
<rect x="465.0" y="204.62" width="378.0" height="0.8" fill="#1c1515"/>
<rect x="465.0" y="187.95" width="378.0" height="0.8" fill="#1c1515"/>
<rect x="465.0" y="171.28" width="378.0" height="0.8" fill="#1c1515"/>
<rect x="540.15" y="155.0" width="0.9" height="333.5" fill="#3c3c3c"/>
<rect x="615.75" y="155.0" width="0.9" height="333.5" fill="#3c3c3c"/>
<rect x="691.35" y="155.0" width="0.9" height="333.5" fill="#3c3c3c"/>
<rect x="766.95" y="155.0" width="0.9" height="333.5" fill="#3c3c3c"/>
<rect x="464.6" y="154.6" width="378.8" height="334.3" fill="none" stroke="#f6f5ee" stroke-width="0.8"/>
<rect x="460.5" y="488.10" width="4" height="0.8" fill="#9a9a92"/>
<text x="459.00" y="491.40" font-family='"Liberation Sans", sans-serif' font-size="8.20" fill="#262626" stroke="#262626" stroke-width="0.22" text-anchor="end" textLength="4.2" lengthAdjust="spacingAndGlyphs">0</text>
<rect x="460.5" y="471.43" width="4" height="0.8" fill="#9a9a92"/>
<text x="459.00" y="474.72" font-family='"Liberation Sans", sans-serif' font-size="8.20" fill="#262626" stroke="#262626" stroke-width="0.22" text-anchor="end" textLength="8.5" lengthAdjust="spacingAndGlyphs">20</text>
<rect x="460.5" y="454.75" width="4" height="0.8" fill="#9a9a92"/>
<text x="459.00" y="458.05" font-family='"Liberation Sans", sans-serif' font-size="8.20" fill="#262626" stroke="#262626" stroke-width="0.22" text-anchor="end" textLength="8.5" lengthAdjust="spacingAndGlyphs">40</text>
<rect x="460.5" y="438.08" width="4" height="0.8" fill="#9a9a92"/>
<text x="459.00" y="441.38" font-family='"Liberation Sans", sans-serif' font-size="8.20" fill="#262626" stroke="#262626" stroke-width="0.22" text-anchor="end" textLength="8.5" lengthAdjust="spacingAndGlyphs">60</text>
<rect x="460.5" y="421.40" width="4" height="0.8" fill="#9a9a92"/>
<text x="459.00" y="424.70" font-family='"Liberation Sans", sans-serif' font-size="8.20" fill="#262626" stroke="#262626" stroke-width="0.22" text-anchor="end" textLength="8.5" lengthAdjust="spacingAndGlyphs">80</text>
<rect x="460.5" y="404.73" width="4" height="0.8" fill="#9a9a92"/>
<text x="459.00" y="408.02" font-family='"Liberation Sans", sans-serif' font-size="8.20" fill="#262626" stroke="#262626" stroke-width="0.22" text-anchor="end" textLength="12.8" lengthAdjust="spacingAndGlyphs">100</text>
<rect x="460.5" y="388.05" width="4" height="0.8" fill="#9a9a92"/>
<text x="459.00" y="391.35" font-family='"Liberation Sans", sans-serif' font-size="8.20" fill="#262626" stroke="#262626" stroke-width="0.22" text-anchor="end" textLength="12.8" lengthAdjust="spacingAndGlyphs">120</text>
<rect x="460.5" y="371.38" width="4" height="0.8" fill="#9a9a92"/>
<text x="459.00" y="374.67" font-family='"Liberation Sans", sans-serif' font-size="8.20" fill="#262626" stroke="#262626" stroke-width="0.22" text-anchor="end" textLength="12.8" lengthAdjust="spacingAndGlyphs">140</text>
<rect x="460.5" y="354.70" width="4" height="0.8" fill="#9a9a92"/>
<text x="459.00" y="358.00" font-family='"Liberation Sans", sans-serif' font-size="8.20" fill="#262626" stroke="#262626" stroke-width="0.22" text-anchor="end" textLength="12.8" lengthAdjust="spacingAndGlyphs">160</text>
<rect x="460.5" y="338.03" width="4" height="0.8" fill="#9a9a92"/>
<text x="459.00" y="341.32" font-family='"Liberation Sans", sans-serif' font-size="8.20" fill="#262626" stroke="#262626" stroke-width="0.22" text-anchor="end" textLength="12.8" lengthAdjust="spacingAndGlyphs">180</text>
<rect x="460.5" y="321.35" width="4" height="0.8" fill="#9a9a92"/>
<text x="459.00" y="324.65" font-family='"Liberation Sans", sans-serif' font-size="8.20" fill="#262626" stroke="#262626" stroke-width="0.22" text-anchor="end" textLength="12.8" lengthAdjust="spacingAndGlyphs">200</text>
<rect x="460.5" y="304.68" width="4" height="0.8" fill="#9a9a92"/>
<text x="459.00" y="307.97" font-family='"Liberation Sans", sans-serif' font-size="8.20" fill="#262626" stroke="#262626" stroke-width="0.22" text-anchor="end" textLength="12.8" lengthAdjust="spacingAndGlyphs">220</text>
<rect x="460.5" y="288.00" width="4" height="0.8" fill="#9a9a92"/>
<text x="459.00" y="291.30" font-family='"Liberation Sans", sans-serif' font-size="8.20" fill="#262626" stroke="#262626" stroke-width="0.22" text-anchor="end" textLength="12.8" lengthAdjust="spacingAndGlyphs">240</text>
<rect x="460.5" y="271.33" width="4" height="0.8" fill="#9a9a92"/>
<text x="459.00" y="274.62" font-family='"Liberation Sans", sans-serif' font-size="8.20" fill="#262626" stroke="#262626" stroke-width="0.22" text-anchor="end" textLength="12.8" lengthAdjust="spacingAndGlyphs">260</text>
<rect x="460.5" y="254.65" width="4" height="0.8" fill="#9a9a92"/>
<text x="459.00" y="257.95" font-family='"Liberation Sans", sans-serif' font-size="8.20" fill="#262626" stroke="#262626" stroke-width="0.22" text-anchor="end" textLength="12.8" lengthAdjust="spacingAndGlyphs">280</text>
<rect x="460.5" y="237.97" width="4" height="0.8" fill="#9a9a92"/>
<text x="459.00" y="241.28" font-family='"Liberation Sans", sans-serif' font-size="8.20" fill="#262626" stroke="#262626" stroke-width="0.22" text-anchor="end" textLength="12.8" lengthAdjust="spacingAndGlyphs">300</text>
<rect x="460.5" y="221.30" width="4" height="0.8" fill="#9a9a92"/>
<text x="459.00" y="224.60" font-family='"Liberation Sans", sans-serif' font-size="8.20" fill="#262626" stroke="#262626" stroke-width="0.22" text-anchor="end" textLength="12.8" lengthAdjust="spacingAndGlyphs">320</text>
<rect x="460.5" y="204.62" width="4" height="0.8" fill="#9a9a92"/>
<text x="459.00" y="207.92" font-family='"Liberation Sans", sans-serif' font-size="8.20" fill="#262626" stroke="#262626" stroke-width="0.22" text-anchor="end" textLength="12.8" lengthAdjust="spacingAndGlyphs">340</text>
<rect x="460.5" y="187.95" width="4" height="0.8" fill="#9a9a92"/>
<text x="459.00" y="191.25" font-family='"Liberation Sans", sans-serif' font-size="8.20" fill="#262626" stroke="#262626" stroke-width="0.22" text-anchor="end" textLength="12.8" lengthAdjust="spacingAndGlyphs">360</text>
<rect x="460.5" y="171.28" width="4" height="0.8" fill="#9a9a92"/>
<text x="459.00" y="174.58" font-family='"Liberation Sans", sans-serif' font-size="8.20" fill="#262626" stroke="#262626" stroke-width="0.22" text-anchor="end" textLength="12.8" lengthAdjust="spacingAndGlyphs">380</text>
<rect x="460.5" y="154.60" width="4" height="0.8" fill="#9a9a92"/>
<text x="459.00" y="157.90" font-family='"Liberation Sans", sans-serif' font-size="8.20" fill="#262626" stroke="#262626" stroke-width="0.22" text-anchor="end" textLength="12.8" lengthAdjust="spacingAndGlyphs">400</text>
<rect x="419" y="488.10" width="3.5" height="0.8" fill="#9a9a92"/>
<text x="418.20" y="491.40" font-family='"Liberation Sans", sans-serif' font-size="8.20" fill="#262626" stroke="#262626" stroke-width="0.22" text-anchor="end" textLength="4.2" lengthAdjust="spacingAndGlyphs">0</text>
<rect x="419" y="454.75" width="3.5" height="0.8" fill="#9a9a92"/>
<text x="418.20" y="458.05" font-family='"Liberation Sans", sans-serif' font-size="8.20" fill="#262626" stroke="#262626" stroke-width="0.22" text-anchor="end" textLength="8.5" lengthAdjust="spacingAndGlyphs">10</text>
<rect x="419" y="421.40" width="3.5" height="0.8" fill="#9a9a92"/>
<text x="418.20" y="424.70" font-family='"Liberation Sans", sans-serif' font-size="8.20" fill="#262626" stroke="#262626" stroke-width="0.22" text-anchor="end" textLength="8.5" lengthAdjust="spacingAndGlyphs">20</text>
<rect x="419" y="388.05" width="3.5" height="0.8" fill="#9a9a92"/>
<text x="418.20" y="391.35" font-family='"Liberation Sans", sans-serif' font-size="8.20" fill="#262626" stroke="#262626" stroke-width="0.22" text-anchor="end" textLength="8.5" lengthAdjust="spacingAndGlyphs">30</text>
<rect x="419" y="354.70" width="3.5" height="0.8" fill="#9a9a92"/>
<text x="418.20" y="358.00" font-family='"Liberation Sans", sans-serif' font-size="8.20" fill="#262626" stroke="#262626" stroke-width="0.22" text-anchor="end" textLength="8.5" lengthAdjust="spacingAndGlyphs">40</text>
<rect x="419" y="321.35" width="3.5" height="0.8" fill="#9a9a92"/>
<text x="418.20" y="324.65" font-family='"Liberation Sans", sans-serif' font-size="8.20" fill="#262626" stroke="#262626" stroke-width="0.22" text-anchor="end" textLength="8.5" lengthAdjust="spacingAndGlyphs">50</text>
<rect x="419" y="288.00" width="3.5" height="0.8" fill="#9a9a92"/>
<text x="418.20" y="291.30" font-family='"Liberation Sans", sans-serif' font-size="8.20" fill="#262626" stroke="#262626" stroke-width="0.22" text-anchor="end" textLength="8.5" lengthAdjust="spacingAndGlyphs">60</text>
<rect x="419" y="254.65" width="3.5" height="0.8" fill="#9a9a92"/>
<text x="418.20" y="257.95" font-family='"Liberation Sans", sans-serif' font-size="8.20" fill="#262626" stroke="#262626" stroke-width="0.22" text-anchor="end" textLength="8.5" lengthAdjust="spacingAndGlyphs">70</text>
<rect x="419" y="221.30" width="3.5" height="0.8" fill="#9a9a92"/>
<text x="418.20" y="224.60" font-family='"Liberation Sans", sans-serif' font-size="8.20" fill="#262626" stroke="#262626" stroke-width="0.22" text-anchor="end" textLength="8.5" lengthAdjust="spacingAndGlyphs">80</text>
<rect x="419" y="187.95" width="3.5" height="0.8" fill="#9a9a92"/>
<text x="418.20" y="191.25" font-family='"Liberation Sans", sans-serif' font-size="8.20" fill="#262626" stroke="#262626" stroke-width="0.22" text-anchor="end" textLength="8.5" lengthAdjust="spacingAndGlyphs">90</text>
<rect x="419" y="154.60" width="3.5" height="0.8" fill="#9a9a92"/>
<text x="418.20" y="157.90" font-family='"Liberation Sans", sans-serif' font-size="8.20" fill="#262626" stroke="#262626" stroke-width="0.22" text-anchor="end" textLength="12.8" lengthAdjust="spacingAndGlyphs">100</text>
<rect x="843.5" y="488.10" width="4" height="0.8" fill="#9a9a92"/>
<text x="850.00" y="491.40" font-family='"Liberation Sans", sans-serif' font-size="8.20" fill="#262626" stroke="#262626" stroke-width="0.22" text-anchor="start" textLength="4.2" lengthAdjust="spacingAndGlyphs">0</text>
<rect x="843.5" y="440.46" width="4" height="0.8" fill="#9a9a92"/>
<text x="850.00" y="443.76" font-family='"Liberation Sans", sans-serif' font-size="8.20" fill="#262626" stroke="#262626" stroke-width="0.22" text-anchor="start" textLength="4.2" lengthAdjust="spacingAndGlyphs">1</text>
<rect x="843.5" y="392.81" width="4" height="0.8" fill="#9a9a92"/>
<text x="850.00" y="396.11" font-family='"Liberation Sans", sans-serif' font-size="8.20" fill="#262626" stroke="#262626" stroke-width="0.22" text-anchor="start" textLength="4.2" lengthAdjust="spacingAndGlyphs">2</text>
<rect x="843.5" y="345.17" width="4" height="0.8" fill="#9a9a92"/>
<text x="850.00" y="348.47" font-family='"Liberation Sans", sans-serif' font-size="8.20" fill="#262626" stroke="#262626" stroke-width="0.22" text-anchor="start" textLength="4.2" lengthAdjust="spacingAndGlyphs">3</text>
<rect x="843.5" y="297.53" width="4" height="0.8" fill="#9a9a92"/>
<text x="850.00" y="300.83" font-family='"Liberation Sans", sans-serif' font-size="8.20" fill="#262626" stroke="#262626" stroke-width="0.22" text-anchor="start" textLength="4.2" lengthAdjust="spacingAndGlyphs">4</text>
<rect x="843.5" y="249.89" width="4" height="0.8" fill="#9a9a92"/>
<text x="850.00" y="253.19" font-family='"Liberation Sans", sans-serif' font-size="8.20" fill="#262626" stroke="#262626" stroke-width="0.22" text-anchor="start" textLength="4.2" lengthAdjust="spacingAndGlyphs">5</text>
<rect x="843.5" y="202.24" width="4" height="0.8" fill="#9a9a92"/>
<text x="850.00" y="205.54" font-family='"Liberation Sans", sans-serif' font-size="8.20" fill="#262626" stroke="#262626" stroke-width="0.22" text-anchor="start" textLength="4.2" lengthAdjust="spacingAndGlyphs">6</text>
<rect x="843.5" y="154.60" width="4" height="0.8" fill="#9a9a92"/>
<text x="850.00" y="157.90" font-family='"Liberation Sans", sans-serif' font-size="8.20" fill="#262626" stroke="#262626" stroke-width="0.22" text-anchor="start" textLength="4.2" lengthAdjust="spacingAndGlyphs">7</text>
<rect x="464.60" y="489.0" width="0.8" height="3.5" fill="#9a9a92"/>
<text x="465.50" y="501.20" font-family='"Liberation Sans", sans-serif' font-size="8.20" fill="#262626" stroke="#262626" stroke-width="0.22" text-anchor="middle" textLength="4.2" lengthAdjust="spacingAndGlyphs">0</text>
<rect x="540.20" y="489.0" width="0.8" height="3.5" fill="#9a9a92"/>
<text x="541.10" y="501.20" font-family='"Liberation Sans", sans-serif' font-size="8.20" fill="#262626" stroke="#262626" stroke-width="0.22" text-anchor="middle" textLength="12.0" lengthAdjust="spacingAndGlyphs">0.5</text>
<rect x="615.80" y="489.0" width="0.8" height="3.5" fill="#9a9a92"/>
<text x="616.70" y="501.20" font-family='"Liberation Sans", sans-serif' font-size="8.20" fill="#262626" stroke="#262626" stroke-width="0.22" text-anchor="middle" textLength="4.2" lengthAdjust="spacingAndGlyphs">1</text>
<rect x="691.40" y="489.0" width="0.8" height="3.5" fill="#9a9a92"/>
<text x="692.30" y="501.20" font-family='"Liberation Sans", sans-serif' font-size="8.20" fill="#262626" stroke="#262626" stroke-width="0.22" text-anchor="middle" textLength="12.0" lengthAdjust="spacingAndGlyphs">1.5</text>
<rect x="767.00" y="489.0" width="0.8" height="3.5" fill="#9a9a92"/>
<text x="767.90" y="501.20" font-family='"Liberation Sans", sans-serif' font-size="8.20" fill="#262626" stroke="#262626" stroke-width="0.22" text-anchor="middle" textLength="4.2" lengthAdjust="spacingAndGlyphs">2</text>
<rect x="842.60" y="489.0" width="0.8" height="3.5" fill="#9a9a92"/>
<text x="843.50" y="501.20" font-family='"Liberation Sans", sans-serif' font-size="8.20" fill="#262626" stroke="#262626" stroke-width="0.22" text-anchor="middle" textLength="12.0" lengthAdjust="spacingAndGlyphs">2.5</text>
<text x="622.50" y="509.60" font-family='"Liberation Sans", sans-serif' font-size="8.40" fill="#262626" stroke="#262626" stroke-width="0.22" text-anchor="start" textLength="61.1" lengthAdjust="spacingAndGlyphs">TORQUE (N.m)</text>
<text x="0" y="0" transform="translate(405.8,322) rotate(-90)" font-family='"Liberation Sans", sans-serif' font-size="8.4" fill="#262626" stroke="#262626" stroke-width="0.2" text-anchor="middle" textLength="64" lengthAdjust="spacingAndGlyphs">EFFICIENCY (%)</text>
<text x="0" y="0" transform="translate(437.4,320) rotate(-90)" font-family='"Liberation Sans", sans-serif' font-size="8.4" fill="#262626" stroke="#262626" stroke-width="0.2" text-anchor="middle" textLength="56.5" lengthAdjust="spacingAndGlyphs">SPEED (RPM)</text>
<text x="0" y="0" transform="translate(858.0,320.5) rotate(90)" font-family='"Liberation Sans", sans-serif' font-size="8.4" fill="#262626" stroke="#262626" stroke-width="0.2" text-anchor="middle" textLength="55" lengthAdjust="spacingAndGlyphs">CURRENT (A)</text>
<defs><linearGradient id="cbar" x1="0" y1="0" x2="0" y2="1">
<stop offset="0" stop-color="#10e060"/><stop offset="0.18" stop-color="#10d890"/><stop offset="0.33" stop-color="#10b0c8"/>
<stop offset="0.5" stop-color="#2078e8"/><stop offset="0.62" stop-color="#3a58d8"/><stop offset="0.75" stop-color="#7040a8"/>
<stop offset="0.88" stop-color="#b02a60"/><stop offset="1" stop-color="#ee1020"/></linearGradient></defs>
<rect x="423.5" y="155.0" width="5" height="333.5" fill="url(#cbar)"/>
<path d="M471.05 202.96 L473.98 203.32 L476.92 204.77 L479.85 207.14 L482.79 208.36 L485.72 209.44 L488.66 209.73 L491.59 211.65 L494.53 211.56 L497.46 212.85 L500.40 213.02 L503.33 214.48 L506.27 217.44 L509.20 218.20 L512.14 219.69 L515.07 219.71 L518.01 221.11 L520.94 223.50 L523.88 223.11 L526.81 225.15 L529.75 225.85 L532.68 226.05 L535.62 228.48 L538.55 228.83 L541.49 229.38 L544.42 229.80 L547.36 232.26 L550.29 233.98 L553.23 235.32 L556.16 234.56 L559.10 235.33 L562.03 236.84 L564.97 238.18 L567.90 238.58 L570.84 240.55 L573.78 242.64 L576.71 242.23 L579.65 242.84 L582.58 244.99 L585.52 246.95 L588.45 247.64 L591.39 248.92 L594.32 249.62 L597.26 249.84 L600.19 251.50 L603.13 251.21 L606.06 251.41 L609.00 253.64 L611.93 254.32 L614.87 253.70 L617.80 256.54 L620.74 257.28 L623.67 257.27 L626.61 259.61 L629.54 259.57 L632.48 258.99 L635.41 260.97 L638.35 261.45 L641.28 261.77 L644.22 262.71 L647.15 264.79 L650.09 266.40 L653.02 267.38 L655.96 267.89 L658.89 268.44 L661.83 270.33 L664.76 271.21 L667.70 272.53 L670.63 272.19 L673.57 274.23 L676.50 275.08 L679.44 275.00 L682.37 277.09 L685.31 279.18 L688.24 279.67 L691.18 279.52 L694.11 282.46 L697.05 282.12 L699.98 283.01 L702.92 283.97 L705.85 284.06 L708.79 286.49 L711.72 287.65 L714.66 287.66 L717.59 289.09 L720.53 288.81 L723.46 289.63 L726.40 290.62 L729.33 293.01 L732.27 293.60 L735.20 295.33 L738.14 295.66 L741.07 294.83 L744.01 295.79 L746.94 296.65 L749.88 299.40 L752.81 300.37 L755.75 300.21 L758.68 300.58 L761.62 301.96 L764.55 304.29 L767.49 303.14 L770.42 304.45 L773.36 306.91 L776.29 307.55 L779.23 306.99 L782.16 309.44 L785.10 309.66 L788.03 312.19 L790.97 311.27 L793.90 314.20 L796.84 313.14 L799.77 315.75 L802.71 317.33 L805.64 316.26 L808.58 318.40 L811.51 319.66 L814.45 319.71 L817.38 322.17 L820.32 323.23" fill="none" stroke="#e41c3c" stroke-width="2.0" stroke-linejoin="round"/>
<path d="M471.05 477.75 L473.98 476.46 L476.92 473.93 L479.85 471.91 L482.79 470.61 L485.72 470.20 L488.66 466.19 L491.59 466.65 L494.53 462.69 L497.46 462.97 L500.40 462.59 L503.33 460.23 L506.27 459.25 L509.20 455.37 L512.14 454.60 L515.07 453.74 L518.01 453.23 L520.94 451.20 L523.88 448.91 L526.81 446.83 L529.75 446.23 L532.68 443.35 L535.62 442.21 L538.55 439.66 L541.49 440.07 L544.42 439.21 L547.36 435.65 L550.29 435.12 L553.23 433.09 L556.16 431.98 L559.10 431.42 L562.03 429.06 L564.97 428.09 L567.90 425.04 L570.84 424.55 L573.78 422.99 L576.71 420.59 L579.65 421.53 L582.58 418.82 L585.52 418.09 L588.45 417.81 L591.39 414.21 L594.32 414.52 L597.26 411.01 L600.19 410.99 L603.13 408.12 L606.06 406.76 L609.00 406.82 L611.93 403.83 L614.87 404.85 L617.80 403.16 L620.74 400.96 L623.67 400.39 L626.61 398.56 L629.54 396.76 L632.48 395.04 L635.41 393.97 L638.35 394.54 L641.28 390.81 L644.22 389.44 L647.15 389.46 L650.09 387.36 L653.02 387.95 L655.96 386.32 L658.89 385.37 L661.83 383.74 L664.76 381.72 L667.70 378.70 L670.63 379.81 L673.57 377.84 L676.50 377.28 L679.44 373.07 L682.37 373.46 L685.31 373.42 L688.24 371.57 L691.18 370.49 L694.11 366.18 L697.05 367.19 L699.98 365.92 L702.92 361.07 L705.85 360.34 L708.79 359.77 L711.72 356.74 L714.66 355.04 L717.59 355.22 L720.53 351.01 L723.46 350.03 L726.40 348.78 L729.33 348.04 L732.27 348.20 L735.20 345.89 L738.14 343.04 L741.07 342.38 L744.01 339.11 L746.94 339.71 L749.88 338.70 L752.81 337.30 L755.75 333.50 L758.68 333.43 L761.62 330.89 L764.55 329.88 L767.49 328.00 L770.42 327.54 L773.36 325.02 L776.29 323.49 L779.23 323.36 L782.16 320.04 L785.10 321.14 L788.03 319.72 L790.97 316.05 L793.90 314.50 L796.84 313.57 L799.77 312.45 L802.71 312.75 L805.64 309.14 L808.58 306.71 L811.51 305.43 L814.45 306.15 L817.38 304.39 L820.32 301.93" fill="none" stroke="#5282e6" stroke-width="1.7" stroke-linejoin="round"/>
<path d="M472.00 420.00 L475.00 379.80 L476.50 384.00 L480.80 351.00 L482.00 362.50 L485.00 339.00 L487.00 345.00 L489.50 328.00 L492.00 319.00 L493.00 330.70 L499.60 303.00 L502.50 297.50 L505.00 302.00 L508.00 296.00 L514.00 290.00 L520.00 289.00 L522.00 300.00 L527.00 300.00 L530.80 290.00 L535.70 293.00 L543.00 286.00 L546.00 290.00 L553.50 283.70 L557.00 287.00 L560.00 280.00 L566.00 285.00 L570.00 281.00 L577.00 278.60 L581.00 284.00 L587.40 279.60 L594.00 287.00 L600.00 284.00 L607.70 288.80 L614.00 286.00 L621.00 290.00 L631.40 286.40 L634.80 293.90 L641.00 291.00 L648.40 292.00 L651.80 295.60 L662.00 298.00 L675.50 302.30 L682.00 300.60 L692.00 303.00 L706.00 305.70 L707.60 310.80 L716.00 310.80 L725.00 313.00 L734.70 315.90 L745.00 318.00 L756.70 322.60 L765.00 322.00 L773.70 324.30 L782.00 329.00 L790.60 332.80 L800.00 334.00 L809.00 337.20 L811.00 340.60 L819.40 338.60" fill="none" stroke="#44dc5e" stroke-width="1.6" stroke-linejoin="round"/>
<defs><clipPath id="plotclip"><rect x="465.0" y="155.0" width="378.0" height="333.5"/></clipPath></defs>
<g clip-path="url(#plotclip)" fill="none" stroke="#ffffff" stroke-opacity="0.36" stroke-width="2.6" stroke-linecap="butt">
<path transform="translate(430.00,244.00) scale(1.000,0.967)" d="M6 8L22 3M1 19H25M13 5V59M13 22L2 44M14 25L24 35M33 11L40 18M31 26L39 33M27 40H60M45 0V60" stroke-width="2.90"/>
<path transform="translate(493.00,242.00) scale(0.923,0.958)" d="M1 13H28M16 1V55L11 51M1 41L28 32M29 10H60M45 0V23M32 26H56Q50 46 28 60M34 30Q43 50 60 58" stroke-width="3.14"/>
<path transform="translate(556.00,237.00) scale(1.000,0.983)" d="M1 11H59M30 1Q22 34 5 58M20 25V59M20 25H53V55L47 53M20 38H53M20 49H53" stroke-width="2.90"/>
<path transform="translate(626.00,232.00) scale(0.908,0.900)" d="M5 3V60M5 3H18L12 19Q22 28 14 38H9M27 5H54V34H27ZM27 19H54M27 5V59L42 51M37 35Q45 50 60 58M54 38L45 45" stroke-width="3.19"/>
<path transform="translate(682.00,230.00) scale(1.017,0.900)" d="M22 3Q15 20 1 32M37 3Q46 20 59 32M29 24Q21 40 8 55L52 51M40 39L56 57" stroke-width="2.85"/>
<path transform="translate(750.00,222.00) scale(0.958,0.933)" d="M5 6H54V53Q54 58 48 58H41M12 19H43M14 31H41V47H14Z" stroke-width="3.03"/>
</g>
<rect x="545.5" y="148.6" width="211" height="2.8" fill="#1e1e1e" opacity="0.75"/>
<rect x="755.5" y="135" width="1.5" height="16" fill="#6a6a66" opacity="0.6"/>
<rect x="543.5" y="133" width="212" height="16" fill="#fdfdfb" stroke="#7a7a76" stroke-width="0.8"/>
<rect x="603.0" y="134" width="0.9" height="14.2" fill="#c4c4c0"/>
<rect x="675.0" y="134" width="0.9" height="14.2" fill="#c4c4c0"/>
<path d="M546.5 143.3V136.8M546.0 136.8H552.5" stroke="#555" stroke-width="1.0"/>
<path d="M547.7 139.8l1.8 2.2l3.4-4.4" fill="none" stroke="#111" stroke-width="1.2"/>
<rect x="555" y="140.4" width="9" height="1.5" fill="#a05a60"/>
<text x="569.00" y="144.00" font-family='"Liberation Sans", sans-serif' font-size="8.60" fill="#c06878" stroke="#c06878" stroke-width="0.22" text-anchor="start" textLength="27.0" lengthAdjust="spacingAndGlyphs">SPEED</text>
<path d="M605.5 143.3V136.8M605.0 136.8H611.5" stroke="#555" stroke-width="1.0"/>
<path d="M606.7 139.8l1.8 2.2l3.4-4.4" fill="none" stroke="#111" stroke-width="1.2"/>
<rect x="614" y="140.4" width="9.5" height="1.5" fill="#5a98b0"/>
<text x="628.00" y="144.00" font-family='"Liberation Sans", sans-serif' font-size="8.60" fill="#68a0c4" stroke="#68a0c4" stroke-width="0.22" text-anchor="start" textLength="41.0" lengthAdjust="spacingAndGlyphs">CURRENT</text>
<path d="M678.2 143.3V136.8M677.7 136.8H684.2" stroke="#555" stroke-width="1.0"/>
<path d="M679.4 139.8l1.8 2.2l3.4-4.4" fill="none" stroke="#111" stroke-width="1.2"/>
<rect x="686" y="140.4" width="9" height="1.5" fill="#50b888"/>
<text x="700.00" y="144.00" font-family='"Liberation Sans", sans-serif' font-size="8.60" fill="#6ac898" stroke="#6ac898" stroke-width="0.22" text-anchor="start" textLength="51.0" lengthAdjust="spacingAndGlyphs">EFFICIENCY</text>
</svg></body></html>
